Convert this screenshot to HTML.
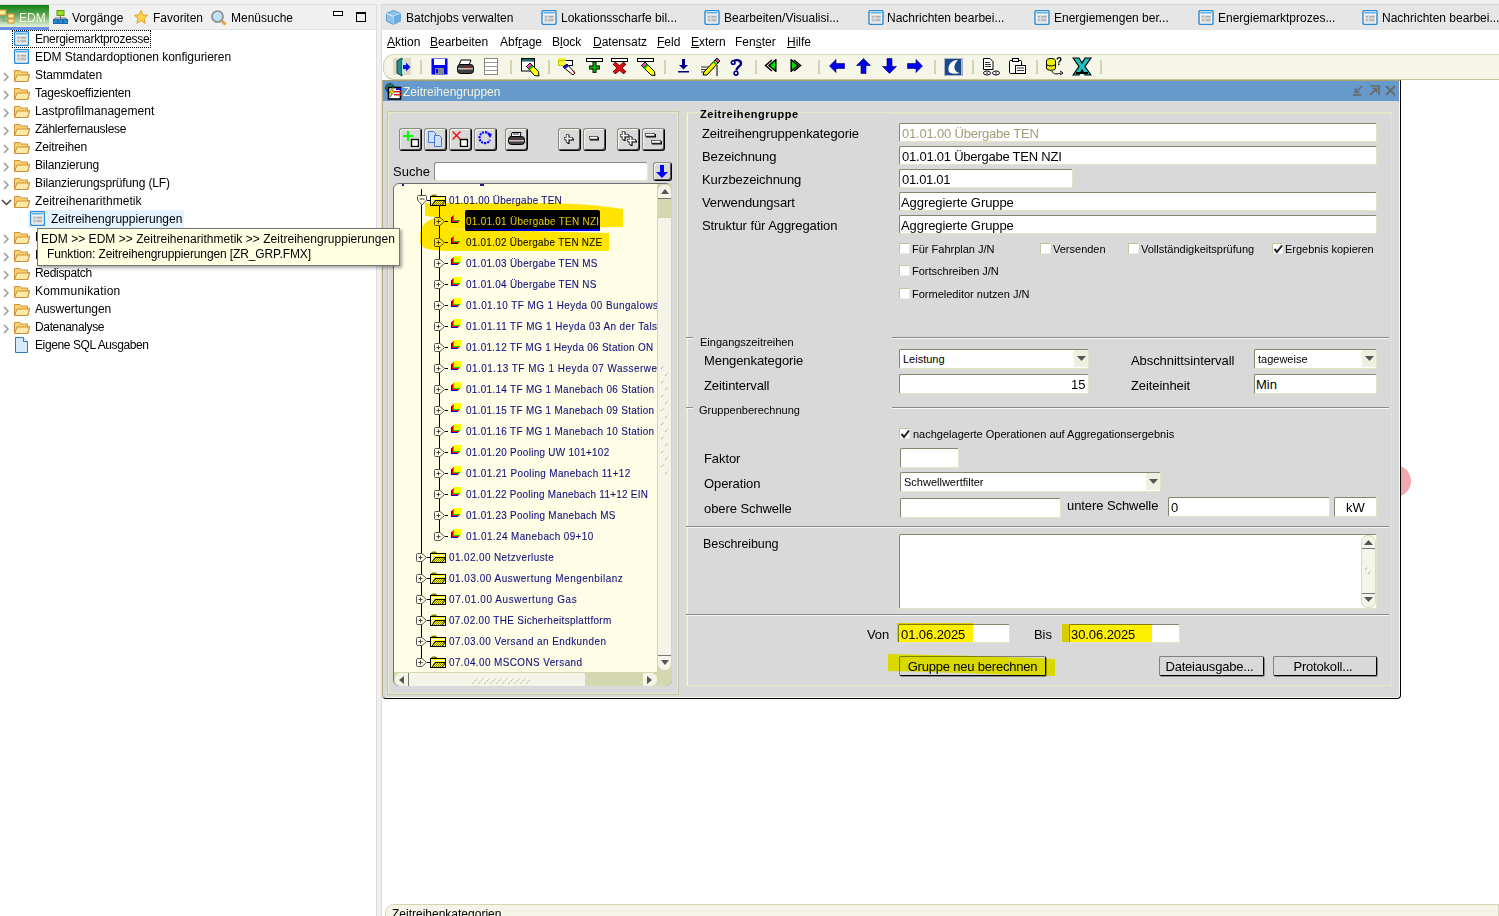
<!DOCTYPE html><html><head><meta charset="utf-8"><style>
*{margin:0;padding:0;box-sizing:border-box}
html,body{width:1499px;height:916px;overflow:hidden;background:#fff;font-family:"Liberation Sans",sans-serif;}
div,svg{position:absolute}
.t{white-space:nowrap;line-height:1}
</style></head><body>
<div style="left:0px;top:0px;width:1499px;height:4px;background:#f0f0f0"></div>
<div style="left:0px;top:4px;width:377px;height:1px;background:#dcdcdc"></div>
<div style="left:0px;top:5px;width:377px;height:24px;background:#f0f0f0"></div>
<div style="left:0px;top:29px;width:377px;height:1px;background:#e3e3e3"></div>
<div style="left:376px;top:4px;width:1px;height:912px;background:#dcdcdc"></div>
<div style="left:377px;top:0px;width:5px;height:916px;background:#f0f0f0"></div>
<div style="left:0px;top:5px;width:49px;height:22px;background:linear-gradient(#108010,#5aa85a 45%,#e8f4e0)"></div>
<div style="left:0px;top:27px;width:49px;height:3px;background:#6a8ee6"></div>
<svg style="left:0px;top:9px" width="16" height="16" viewBox="0 0 16 16"><path d="M3 7 V12 H8" stroke="#8a8a8a" fill="none" stroke-width="1"/><rect x="-1" y="1" width="7" height="5" fill="#ffe9a0" stroke="#d89030"/><rect x="8" y="5" width="6" height="4" fill="#ffe9a0" stroke="#d89030"/><rect x="8" y="10" width="6" height="4" fill="#ffe9a0" stroke="#d89030"/></svg>
<div class="t" style="left:19px;top:12px;font-size:12px;color:#fff8e0">EDM</div>
<svg style="left:53px;top:10px" width="15" height="14" viewBox="0 0 15 14"><rect x="4" y="0.5" width="7" height="5" fill="#9fdc20" stroke="#5a9a10"/><path d="M7.5 5.5V8 M2 8H13 M2 8v2 M7.5 8v2 M13 8v2" stroke="#707070" fill="none"/><rect x="0.5" y="9.5" width="4" height="4" fill="#2a8ad4" stroke="#1a6ab0"/><rect x="5.5" y="9.5" width="4" height="4" fill="#2a8ad4" stroke="#1a6ab0"/><rect x="10.5" y="9.5" width="4" height="4" fill="#2a8ad4" stroke="#1a6ab0"/></svg>
<div class="t" style="left:72px;top:12px;font-size:12px;color:#000">Vorgänge</div>
<svg style="left:134px;top:10px" width="14" height="14" viewBox="0 0 14 14"><path d="M7 0.5 L9 5 L13.5 5.3 L10 8.5 L11.2 13.3 L7 10.6 L2.8 13.3 L4 8.5 L0.5 5.3 L5 5 Z" fill="#ffd54a" stroke="#e0a020" stroke-width="1"/></svg>
<div class="t" style="left:153px;top:12px;font-size:12px;color:#000">Favoriten</div>
<svg style="left:211px;top:10px" width="16" height="16" viewBox="0 0 16 16"><circle cx="6.5" cy="6.5" r="5.5" fill="#bfe4fa" stroke="#8a8a8a" stroke-width="1.6"/><path d="M10.5 10.5 L14.5 14.5" stroke="#e0a040" stroke-width="3"/></svg>
<div class="t" style="left:231px;top:12px;font-size:12px;color:#000">Menüsuche</div>
<div style="left:333px;top:11px;width:10px;height:5px;border:1.5px solid #000;background:#fff"></div>
<div style="left:356px;top:12px;width:10px;height:10px;border:1.5px solid #000;border-top:2.5px solid #000"></div>
<svg style="left:14px;top:31px" width="15" height="15" viewBox="0 0 15 15"><rect x="0.5" y="0.5" width="14" height="14" rx="1.5" fill="#f4f4f4" stroke="#2a8ad4" stroke-width="1.4"/><rect x="2" y="2" width="11" height="1.5" fill="#5ab0e8"/><rect x="2.5" y="5" width="10" height="7.5" fill="#dcdcdc"/><path d="M3.5 6.8h2 M3.5 10h2 M7 6.8h5 M7 10h5" stroke="#999" stroke-width="1"/></svg>
<div class="t" style="left:35px;top:33px;font-size:12px;color:#000;letter-spacing:-0.282px">Energiemarktprozesse</div>
<svg style="left:14px;top:49px" width="15" height="15" viewBox="0 0 15 15"><rect x="0.5" y="0.5" width="14" height="14" rx="1.5" fill="#f4f4f4" stroke="#2a8ad4" stroke-width="1.4"/><rect x="2" y="2" width="11" height="1.5" fill="#5ab0e8"/><rect x="2.5" y="5" width="10" height="7.5" fill="#dcdcdc"/><path d="M3.5 6.8h2 M3.5 10h2 M7 6.8h5 M7 10h5" stroke="#999" stroke-width="1"/></svg>
<div class="t" style="left:35px;top:51px;font-size:12px;color:#000;letter-spacing:-0.041px">EDM Standardoptionen konfigurieren</div>
<svg style="left:3px;top:72px" width="7" height="11" viewBox="0 0 7 11"><path d="M1 1 L5 5 L1 9" fill="none" stroke="#9a9a9a" stroke-width="1.5"/></svg>
<svg style="left:14px;top:68px" width="16" height="14" viewBox="0 0 16 14"><path d="M0.5 2.5 V13.5 H14 L15.5 6.5 H13.5 V4 H7 L6 2.5 Z" fill="#f8d270" stroke="#d09038" stroke-width="1"/><path d="M0.5 13.5 L3 7 H15.5 L13.5 13.5 Z" fill="#fde9a8" stroke="#d09038" stroke-width="1"/></svg>
<div class="t" style="left:35px;top:69px;font-size:12px;color:#000;letter-spacing:-0.104px">Stammdaten</div>
<svg style="left:3px;top:90px" width="7" height="11" viewBox="0 0 7 11"><path d="M1 1 L5 5 L1 9" fill="none" stroke="#9a9a9a" stroke-width="1.5"/></svg>
<svg style="left:14px;top:86px" width="16" height="14" viewBox="0 0 16 14"><path d="M0.5 2.5 V13.5 H14 L15.5 6.5 H13.5 V4 H7 L6 2.5 Z" fill="#f8d270" stroke="#d09038" stroke-width="1"/><path d="M0.5 13.5 L3 7 H15.5 L13.5 13.5 Z" fill="#fde9a8" stroke="#d09038" stroke-width="1"/></svg>
<div class="t" style="left:35px;top:87px;font-size:12px;color:#000;letter-spacing:-0.187px">Tageskoeffizienten</div>
<svg style="left:3px;top:108px" width="7" height="11" viewBox="0 0 7 11"><path d="M1 1 L5 5 L1 9" fill="none" stroke="#9a9a9a" stroke-width="1.5"/></svg>
<svg style="left:14px;top:104px" width="16" height="14" viewBox="0 0 16 14"><path d="M0.5 2.5 V13.5 H14 L15.5 6.5 H13.5 V4 H7 L6 2.5 Z" fill="#f8d270" stroke="#d09038" stroke-width="1"/><path d="M0.5 13.5 L3 7 H15.5 L13.5 13.5 Z" fill="#fde9a8" stroke="#d09038" stroke-width="1"/></svg>
<div class="t" style="left:35px;top:105px;font-size:12px;color:#000;letter-spacing:0.029px">Lastprofilmanagement</div>
<svg style="left:3px;top:126px" width="7" height="11" viewBox="0 0 7 11"><path d="M1 1 L5 5 L1 9" fill="none" stroke="#9a9a9a" stroke-width="1.5"/></svg>
<svg style="left:14px;top:122px" width="16" height="14" viewBox="0 0 16 14"><path d="M0.5 2.5 V13.5 H14 L15.5 6.5 H13.5 V4 H7 L6 2.5 Z" fill="#f8d270" stroke="#d09038" stroke-width="1"/><path d="M0.5 13.5 L3 7 H15.5 L13.5 13.5 Z" fill="#fde9a8" stroke="#d09038" stroke-width="1"/></svg>
<div class="t" style="left:35px;top:123px;font-size:12px;color:#000;letter-spacing:-0.291px">Zählerfernauslese</div>
<svg style="left:3px;top:144px" width="7" height="11" viewBox="0 0 7 11"><path d="M1 1 L5 5 L1 9" fill="none" stroke="#9a9a9a" stroke-width="1.5"/></svg>
<svg style="left:14px;top:140px" width="16" height="14" viewBox="0 0 16 14"><path d="M0.5 2.5 V13.5 H14 L15.5 6.5 H13.5 V4 H7 L6 2.5 Z" fill="#f8d270" stroke="#d09038" stroke-width="1"/><path d="M0.5 13.5 L3 7 H15.5 L13.5 13.5 Z" fill="#fde9a8" stroke="#d09038" stroke-width="1"/></svg>
<div class="t" style="left:35px;top:141px;font-size:12px;color:#000;letter-spacing:-0.127px">Zeitreihen</div>
<svg style="left:3px;top:162px" width="7" height="11" viewBox="0 0 7 11"><path d="M1 1 L5 5 L1 9" fill="none" stroke="#9a9a9a" stroke-width="1.5"/></svg>
<svg style="left:14px;top:158px" width="16" height="14" viewBox="0 0 16 14"><path d="M0.5 2.5 V13.5 H14 L15.5 6.5 H13.5 V4 H7 L6 2.5 Z" fill="#f8d270" stroke="#d09038" stroke-width="1"/><path d="M0.5 13.5 L3 7 H15.5 L13.5 13.5 Z" fill="#fde9a8" stroke="#d09038" stroke-width="1"/></svg>
<div class="t" style="left:35px;top:159px;font-size:12px;color:#000;letter-spacing:-0.178px">Bilanzierung</div>
<svg style="left:3px;top:180px" width="7" height="11" viewBox="0 0 7 11"><path d="M1 1 L5 5 L1 9" fill="none" stroke="#9a9a9a" stroke-width="1.5"/></svg>
<svg style="left:14px;top:176px" width="16" height="14" viewBox="0 0 16 14"><path d="M0.5 2.5 V13.5 H14 L15.5 6.5 H13.5 V4 H7 L6 2.5 Z" fill="#f8d270" stroke="#d09038" stroke-width="1"/><path d="M0.5 13.5 L3 7 H15.5 L13.5 13.5 Z" fill="#fde9a8" stroke="#d09038" stroke-width="1"/></svg>
<div class="t" style="left:35px;top:177px;font-size:12px;color:#000;letter-spacing:-0.128px">Bilanzierungsprüfung (LF)</div>
<svg style="left:1px;top:199px" width="12" height="8" viewBox="0 0 12 8"><path d="M1 1 L5.5 5.5 L10 1" fill="none" stroke="#404040" stroke-width="1.5"/></svg>
<svg style="left:14px;top:194px" width="16" height="14" viewBox="0 0 16 14"><path d="M0.5 2.5 V13.5 H14 L15.5 6.5 H13.5 V4 H7 L6 2.5 Z" fill="#f8d270" stroke="#d09038" stroke-width="1"/><path d="M0.5 13.5 L3 7 H15.5 L13.5 13.5 Z" fill="#fde9a8" stroke="#d09038" stroke-width="1"/></svg>
<div class="t" style="left:35px;top:195px;font-size:12px;color:#000;letter-spacing:0.062px">Zeitreihenarithmetik</div>
<div style="left:28px;top:210px;width:156px;height:18px;background:#e5f3ff"></div>
<svg style="left:30px;top:211px" width="15" height="15" viewBox="0 0 15 15"><rect x="0.5" y="0.5" width="14" height="14" rx="1.5" fill="#f4f4f4" stroke="#2a8ad4" stroke-width="1.4"/><rect x="2" y="2" width="11" height="1.5" fill="#5ab0e8"/><rect x="2.5" y="5" width="10" height="7.5" fill="#dcdcdc"/><path d="M3.5 6.8h2 M3.5 10h2 M7 6.8h5 M7 10h5" stroke="#999" stroke-width="1"/></svg>
<div class="t" style="left:51px;top:213px;font-size:12px;color:#000;letter-spacing:0.03px">Zeitreihengruppierungen</div>
<svg style="left:3px;top:234px" width="7" height="11" viewBox="0 0 7 11"><path d="M1 1 L5 5 L1 9" fill="none" stroke="#9a9a9a" stroke-width="1.5"/></svg>
<svg style="left:14px;top:230px" width="16" height="14" viewBox="0 0 16 14"><path d="M0.5 2.5 V13.5 H14 L15.5 6.5 H13.5 V4 H7 L6 2.5 Z" fill="#f8d270" stroke="#d09038" stroke-width="1"/><path d="M0.5 13.5 L3 7 H15.5 L13.5 13.5 Z" fill="#fde9a8" stroke="#d09038" stroke-width="1"/></svg>
<div class="t" style="left:35px;top:231px;font-size:12px;color:#000;letter-spacing:0px">Einsatzplanung</div>
<svg style="left:3px;top:252px" width="7" height="11" viewBox="0 0 7 11"><path d="M1 1 L5 5 L1 9" fill="none" stroke="#9a9a9a" stroke-width="1.5"/></svg>
<svg style="left:14px;top:248px" width="16" height="14" viewBox="0 0 16 14"><path d="M0.5 2.5 V13.5 H14 L15.5 6.5 H13.5 V4 H7 L6 2.5 Z" fill="#f8d270" stroke="#d09038" stroke-width="1"/><path d="M0.5 13.5 L3 7 H15.5 L13.5 13.5 Z" fill="#fde9a8" stroke="#d09038" stroke-width="1"/></svg>
<div class="t" style="left:35px;top:249px;font-size:12px;color:#000;letter-spacing:0px">Netzbetrieb</div>
<svg style="left:3px;top:270px" width="7" height="11" viewBox="0 0 7 11"><path d="M1 1 L5 5 L1 9" fill="none" stroke="#9a9a9a" stroke-width="1.5"/></svg>
<svg style="left:14px;top:266px" width="16" height="14" viewBox="0 0 16 14"><path d="M0.5 2.5 V13.5 H14 L15.5 6.5 H13.5 V4 H7 L6 2.5 Z" fill="#f8d270" stroke="#d09038" stroke-width="1"/><path d="M0.5 13.5 L3 7 H15.5 L13.5 13.5 Z" fill="#fde9a8" stroke="#d09038" stroke-width="1"/></svg>
<div class="t" style="left:35px;top:267px;font-size:12px;color:#000;letter-spacing:-0.318px">Redispatch</div>
<svg style="left:3px;top:288px" width="7" height="11" viewBox="0 0 7 11"><path d="M1 1 L5 5 L1 9" fill="none" stroke="#9a9a9a" stroke-width="1.5"/></svg>
<svg style="left:14px;top:284px" width="16" height="14" viewBox="0 0 16 14"><path d="M0.5 2.5 V13.5 H14 L15.5 6.5 H13.5 V4 H7 L6 2.5 Z" fill="#f8d270" stroke="#d09038" stroke-width="1"/><path d="M0.5 13.5 L3 7 H15.5 L13.5 13.5 Z" fill="#fde9a8" stroke="#d09038" stroke-width="1"/></svg>
<div class="t" style="left:35px;top:285px;font-size:12px;color:#000;letter-spacing:0.21px">Kommunikation</div>
<svg style="left:3px;top:306px" width="7" height="11" viewBox="0 0 7 11"><path d="M1 1 L5 5 L1 9" fill="none" stroke="#9a9a9a" stroke-width="1.5"/></svg>
<svg style="left:14px;top:302px" width="16" height="14" viewBox="0 0 16 14"><path d="M0.5 2.5 V13.5 H14 L15.5 6.5 H13.5 V4 H7 L6 2.5 Z" fill="#f8d270" stroke="#d09038" stroke-width="1"/><path d="M0.5 13.5 L3 7 H15.5 L13.5 13.5 Z" fill="#fde9a8" stroke="#d09038" stroke-width="1"/></svg>
<div class="t" style="left:35px;top:303px;font-size:12px;color:#000;letter-spacing:-0.049px">Auswertungen</div>
<svg style="left:3px;top:324px" width="7" height="11" viewBox="0 0 7 11"><path d="M1 1 L5 5 L1 9" fill="none" stroke="#9a9a9a" stroke-width="1.5"/></svg>
<svg style="left:14px;top:320px" width="16" height="14" viewBox="0 0 16 14"><path d="M0.5 2.5 V13.5 H14 L15.5 6.5 H13.5 V4 H7 L6 2.5 Z" fill="#f8d270" stroke="#d09038" stroke-width="1"/><path d="M0.5 13.5 L3 7 H15.5 L13.5 13.5 Z" fill="#fde9a8" stroke="#d09038" stroke-width="1"/></svg>
<div class="t" style="left:35px;top:321px;font-size:12px;color:#000;letter-spacing:-0.353px">Datenanalyse</div>
<svg style="left:15px;top:337px" width="13" height="16" viewBox="0 0 13 16"><path d="M0.5 0.5 H8.5 L12.5 4.5 V15.5 H0.5 Z" fill="#d8eaf8" stroke="#2a7ac0"/><path d="M8.5 0.5 V4.5 H12.5" fill="#fff" stroke="#2a7ac0"/></svg>
<div class="t" style="left:35px;top:339px;font-size:12px;color:#000;letter-spacing:-0.387px">Eigene SQL Ausgaben</div>
<div style="left:12px;top:30px;width:139px;height:18px;border:1px dotted #000"></div>
<div style="left:37px;top:228px;width:363px;height:38px;z-index:10;background:#ffffe1;border:1px solid #767676;box-shadow:2px 2px 3px rgba(0,0,0,0.35)"></div>
<div class="t" style="left:41px;top:233px;font-size:12px;color:#000;z-index:11"><span style='letter-spacing:0.039px'>EDM &gt;&gt; EDM &gt;&gt; Zeitreihenarithmetik &gt;&gt; Zeitreihengruppierungen</span></div>
<div class="t" style="left:47px;top:248px;font-size:12px;color:#000;z-index:11;letter-spacing:-0.117px">Funktion: Zeitreihengruppierungen [ZR_GRP.FMX]</div>
<div style="left:381px;top:4px;width:1px;height:912px;background:#dcdcdc"></div>
<div style="left:382px;top:4px;width:1117px;height:1px;background:#d4d4d4"></div>
<div style="left:382px;top:5px;width:1117px;height:25px;background:#e6e6e6"></div>
<div style="left:382px;top:30px;width:1117px;height:25px;background:#fff"></div>
<svg style="left:386px;top:10px" width="15" height="15" viewBox="0 0 15 15"><path d="M7.5 0.5 L14.5 3.5 V11 L7.5 14.5 L0.5 11 V3.5 Z" fill="#8cc4ec" stroke="#5a9ad0"/><path d="M0.5 3.5 L7.5 6.5 L14.5 3.5 M7.5 6.5 V14.5" fill="none" stroke="#e8f4fc" stroke-width="1"/><path d="M7.5 6.5 L14.5 3.5 V11 L7.5 14.5Z" fill="#6aaee0"/></svg>
<div class="t" style="left:406px;top:12px;font-size:12px;color:#000">Batchjobs verwalten</div>
<svg style="left:541px;top:10px" width="16" height="15" viewBox="0 0 15 15"><rect x="0.5" y="0.5" width="14" height="14" rx="1.5" fill="#f4f4f4" stroke="#2a8ad4" stroke-width="1.4"/><rect x="2" y="2" width="11" height="1.5" fill="#5ab0e8"/><rect x="2.5" y="5" width="10" height="7.5" fill="#dcdcdc"/><path d="M3.5 6.8h2 M3.5 10h2 M7 6.8h5 M7 10h5" stroke="#999" stroke-width="1"/></svg>
<div class="t" style="left:561px;top:12px;font-size:12px;color:#000">Lokationsscharfe bil...</div>
<svg style="left:704px;top:10px" width="16" height="15" viewBox="0 0 15 15"><rect x="0.5" y="0.5" width="14" height="14" rx="1.5" fill="#f4f4f4" stroke="#2a8ad4" stroke-width="1.4"/><rect x="2" y="2" width="11" height="1.5" fill="#5ab0e8"/><rect x="2.5" y="5" width="10" height="7.5" fill="#dcdcdc"/><path d="M3.5 6.8h2 M3.5 10h2 M7 6.8h5 M7 10h5" stroke="#999" stroke-width="1"/></svg>
<div class="t" style="left:724px;top:12px;font-size:12px;color:#000">Bearbeiten/Visualisi...</div>
<svg style="left:868px;top:10px" width="16" height="15" viewBox="0 0 15 15"><rect x="0.5" y="0.5" width="14" height="14" rx="1.5" fill="#f4f4f4" stroke="#2a8ad4" stroke-width="1.4"/><rect x="2" y="2" width="11" height="1.5" fill="#5ab0e8"/><rect x="2.5" y="5" width="10" height="7.5" fill="#dcdcdc"/><path d="M3.5 6.8h2 M3.5 10h2 M7 6.8h5 M7 10h5" stroke="#999" stroke-width="1"/></svg>
<div class="t" style="left:887px;top:12px;font-size:12px;color:#000">Nachrichten bearbei...</div>
<svg style="left:1034px;top:10px" width="16" height="15" viewBox="0 0 15 15"><rect x="0.5" y="0.5" width="14" height="14" rx="1.5" fill="#f4f4f4" stroke="#2a8ad4" stroke-width="1.4"/><rect x="2" y="2" width="11" height="1.5" fill="#5ab0e8"/><rect x="2.5" y="5" width="10" height="7.5" fill="#dcdcdc"/><path d="M3.5 6.8h2 M3.5 10h2 M7 6.8h5 M7 10h5" stroke="#999" stroke-width="1"/></svg>
<div class="t" style="left:1054px;top:12px;font-size:12px;color:#000">Energiemengen ber...</div>
<svg style="left:1198px;top:10px" width="16" height="15" viewBox="0 0 15 15"><rect x="0.5" y="0.5" width="14" height="14" rx="1.5" fill="#f4f4f4" stroke="#2a8ad4" stroke-width="1.4"/><rect x="2" y="2" width="11" height="1.5" fill="#5ab0e8"/><rect x="2.5" y="5" width="10" height="7.5" fill="#dcdcdc"/><path d="M3.5 6.8h2 M3.5 10h2 M7 6.8h5 M7 10h5" stroke="#999" stroke-width="1"/></svg>
<div class="t" style="left:1218px;top:12px;font-size:12px;color:#000">Energiemarktprozes...</div>
<svg style="left:1362px;top:10px" width="16" height="15" viewBox="0 0 15 15"><rect x="0.5" y="0.5" width="14" height="14" rx="1.5" fill="#f4f4f4" stroke="#2a8ad4" stroke-width="1.4"/><rect x="2" y="2" width="11" height="1.5" fill="#5ab0e8"/><rect x="2.5" y="5" width="10" height="7.5" fill="#dcdcdc"/><path d="M3.5 6.8h2 M3.5 10h2 M7 6.8h5 M7 10h5" stroke="#999" stroke-width="1"/></svg>
<div class="t" style="left:1382px;top:12px;font-size:12px;color:#000">Nachrichten bearbei...</div>
<div class="t" style="left:387px;top:36px;font-size:12px;color:#000"><u>A</u>ktion</div>
<div class="t" style="left:430px;top:36px;font-size:12px;color:#000"><u>B</u>earbeiten</div>
<div class="t" style="left:500px;top:36px;font-size:12px;color:#000">Abf<u>r</u>age</div>
<div class="t" style="left:552px;top:36px;font-size:12px;color:#000">B<u>l</u>ock</div>
<div class="t" style="left:593px;top:36px;font-size:12px;color:#000"><u>D</u>atensatz</div>
<div class="t" style="left:657px;top:36px;font-size:12px;color:#000"><u>F</u>eld</div>
<div class="t" style="left:691px;top:36px;font-size:12px;color:#000"><u>E</u>xtern</div>
<div class="t" style="left:735px;top:36px;font-size:12px;color:#000">Fen<u>s</u>ter</div>
<div class="t" style="left:787px;top:36px;font-size:12px;color:#000"><u>H</u>ilfe</div>
<div style="left:383px;top:54px;width:1130px;height:26px;background:#f5f5e8;border:1px solid #d6d8b4;border-bottom-color:#c8c49a;border-radius:11px 0 0 11px;border-right:none"></div>
<div style="left:420px;top:60px;width:2px;height:14px;background:#d4d4b0"></div>
<div style="left:510px;top:60px;width:2px;height:14px;background:#d4d4b0"></div>
<div style="left:548px;top:60px;width:2px;height:14px;background:#d4d4b0"></div>
<div style="left:664px;top:60px;width:2px;height:14px;background:#d4d4b0"></div>
<div style="left:755px;top:60px;width:2px;height:14px;background:#d4d4b0"></div>
<div style="left:818px;top:60px;width:2px;height:14px;background:#d4d4b0"></div>
<div style="left:934px;top:60px;width:2px;height:14px;background:#d4d4b0"></div>
<div style="left:972px;top:60px;width:2px;height:14px;background:#d4d4b0"></div>
<div style="left:1036px;top:60px;width:2px;height:14px;background:#d4d4b0"></div>
<div style="left:1100px;top:60px;width:2px;height:14px;background:#d4d4b0"></div>
<svg style="left:392px;top:57px" width="20" height="20" viewBox="0 0 20 20"><rect x="1" y="1" width="18" height="17" fill="#c8c4a0" opacity="0.55"/><path d="M5 4 L10 1 V19 L5 16 Z" fill="#2a8a8a" stroke="#104848"/><rect x="10" y="3" width="1.5" height="14" fill="#a0f0f0"/><path d="M11 8 H14 V5.5 L18.5 10 L14 14.5 V12 H11Z" fill="#1010e0"/></svg>
<svg style="left:431px;top:58px" width="17" height="17" viewBox="0 0 17 17"><rect x="0.5" y="0.5" width="16" height="16" fill="#0000f0"/><rect x="3" y="1" width="11" height="6" fill="#fff"/><rect x="4" y="10" width="9" height="6" fill="#888"/><rect x="5" y="11" width="2" height="4" fill="#0000f0"/></svg>
<svg style="left:457px;top:59px" width="17" height="16" viewBox="0 0 17 16"><path d="M4 1 H14 L12 6 H2 Z" fill="#fff" stroke="#000"/><rect x="0.5" y="5.5" width="16" height="9" rx="3" fill="#404040" stroke="#000"/><rect x="1" y="9" width="15" height="1.5" fill="#c0c0c0"/><rect x="9" y="8" width="3" height="1" fill="#e00"/></svg>
<svg style="left:484px;top:58px" width="14" height="17" viewBox="0 0 14 17"><rect x="0.5" y="0.5" width="13" height="16" fill="#fff" stroke="#888"/><path d="M1 4.5H13 M1 8.5H13 M1 12.5H13" stroke="#999"/></svg>
<svg style="left:521px;top:58px" width="19" height="19" viewBox="0 0 19 19"><rect x="0.5" y="0.5" width="13" height="12.5" fill="#fff" stroke="#000"/><rect x="1" y="1" width="12" height="2.5" fill="#1a6a6a"/><path d="M5.5 8.5 L9 5 L17.5 13.5 L18 18 L13.5 17.5 Z" fill="#ffff00" stroke="#000"/><path d="M5.5 8.5 L9 5 L11 7 L7.5 10.5Z" fill="#ff40c0" stroke="#000" stroke-width="0.8"/><path d="M7.5 10.5 L11 7 L12.5 8.5 L9 12Z" fill="#00c000"/></svg>
<svg style="left:558px;top:58px" width="19" height="19" viewBox="0 0 19 19"><rect x="0.5" y="2.5" width="14" height="5" fill="#fff" stroke="#000"/><rect x="0" y="0" width="8" height="8" fill="#f0f000" opacity="0.8"/><path d="M5 9 L9 6 L17 15 L15 17Z" fill="#fff" stroke="#000"/><path d="M5 9 L9 6 L11 8 L7 11Z" fill="#1010c0"/><path d="M15 13 L17 15" stroke="#e00000" stroke-width="1.5"/></svg>
<svg style="left:586px;top:58px" width="17" height="16" viewBox="0 0 17 16"><rect x="0.5" y="0.5" width="16" height="3" fill="#fff" stroke="#000"/><path d="M8.5 4 V15 M3 9.5 H14" stroke="#000" stroke-width="4"/><path d="M8.5 4.5 V14.5 M3.5 9.5 H13.5" stroke="#10b010" stroke-width="2.2"/></svg>
<svg style="left:611px;top:58px" width="17" height="16" viewBox="0 0 17 16"><rect x="0.5" y="0.5" width="16" height="3" fill="#fff" stroke="#000"/><path d="M3 5 L14 15 M14 5 L3 15" stroke="#600000" stroke-width="4"/><path d="M3.5 5.5 L13.5 14.5 M13.5 5.5 L3.5 14.5" stroke="#e01010" stroke-width="2.4"/></svg>
<svg style="left:637px;top:58px" width="19" height="18" viewBox="0 0 19 18"><rect x="0.5" y="0.5" width="16" height="3" fill="#fff" stroke="#000"/><path d="M4.5 7.5 L8 4 L17.5 13.5 L18 17.5 L14 17 Z" fill="#ffff00" stroke="#000"/><path d="M4.5 7.5 L8 4 L10 6 L6.5 9.5Z" fill="#ff40c0" stroke="#000" stroke-width="0.8"/><path d="M6.5 9.5 L10 6 L11.5 7.5 L8 11Z" fill="#00c000"/></svg>
<svg style="left:678px;top:59px" width="11" height="14" viewBox="0 0 11 14"><path d="M5.5 0 V8" stroke="#000080" stroke-width="3"/><path d="M1 6 H10 L5.5 10.5Z" fill="#000080"/><rect x="0" y="12" width="11" height="1.5" fill="#000080"/></svg>
<svg style="left:701px;top:57px" width="19" height="19" viewBox="0 0 19 19"><path d="M0 10H8 M0 12.5H7 M0 15H6" stroke="#000" stroke-width="0.8"/><path d="M3 15 L14 3 L17 6 L6 18 L2 18Z" fill="#f0f000" stroke="#000"/><path d="M14 3 L16 1 L19 4 L17 6Z" fill="#e040a0" stroke="#000"/><path d="M12.5 4.5 L15.5 7.5" stroke="#20c020" stroke-width="2"/><path d="M16 8 V19" stroke="#000"/></svg>
<svg style="left:730px;top:58px" width="13" height="18" viewBox="0 0 13 18"><path d="M3 4 C4 1.5 11 1 11 5.5 C11 8.5 6.5 8.5 6.5 12.5" fill="none" stroke="#000080" stroke-width="2.4"/><circle cx="3.2" cy="4.5" r="1.8" fill="#fff" stroke="#000080" stroke-width="1.6"/><circle cx="6" cy="15.2" r="1.9" fill="#fff" stroke="#000080" stroke-width="1.6"/></svg>
<svg style="left:764px;top:59px" width="13" height="13" viewBox="0 0 13 13"><path d="M8 1 L1.5 6.5 L8 12" fill="none" stroke="#000" stroke-width="1.5"/><path d="M11.8 0.8 V12.2 L5 6.5Z" fill="#00e000" stroke="#000" stroke-width="1.5" stroke-linejoin="miter"/></svg>
<svg style="left:790px;top:59px" width="13" height="13" viewBox="0 0 13 13"><path d="M4 1 L10.5 6.5 L4 12" fill="none" stroke="#000" stroke-width="1.5"/><path d="M1.2 0.8 V12.2 L8 6.5Z" fill="#00e000" stroke="#000" stroke-width="1.5"/></svg>
<svg style="left:829px;top:59px" width="16" height="14" viewBox="0 0 16 14"><path d="M0.5 7 L7 0.5 V4.5 H15.5 V9.5 H7 V13.5Z" fill="#0000f0" stroke="#000060" stroke-width="0.6"/></svg>
<svg style="left:856px;top:58px" width="15" height="16" viewBox="0 0 15 16"><path d="M7.5 0.5 L14.5 7.5 H10 V15.5 H5 V7.5 H0.5Z" fill="#0000f0" stroke="#000060" stroke-width="0.6"/></svg>
<svg style="left:882px;top:58px" width="15" height="16" viewBox="0 0 15 16"><path d="M7.5 15.5 L14.5 8.5 H10 V0.5 H5 V8.5 H0.5Z" fill="#0000f0" stroke="#000060" stroke-width="0.6"/></svg>
<svg style="left:907px;top:59px" width="16" height="14" viewBox="0 0 16 14"><path d="M15.5 7 L9 0.5 V4.5 H0.5 V9.5 H9 V13.5Z" fill="#0000f0" stroke="#000060" stroke-width="0.6"/></svg>
<svg style="left:944px;top:58px" width="19" height="18" viewBox="0 0 19 18"><rect x="0" y="0" width="19" height="18" fill="#a8b4c8"/><rect x="1" y="1" width="16" height="16" fill="#1a4a8a"/><path d="M14 2 C6 2 3 9 5 14 C7 16 12 16 16 15 C10 14 8 8 14 2Z" fill="#fff"/></svg>
<svg style="left:982px;top:58px" width="20" height="18" viewBox="0 0 20 18"><path d="M1.5 0.5 H8 L11 3.5 V11.5 H1.5Z" fill="#fff" stroke="#000"/><path d="M3 4.5H8 M3 6.5H9 M3 8.5H9" stroke="#000" stroke-width="0.8"/><ellipse cx="5" cy="15" rx="3.5" ry="2" fill="#fff" stroke="#000"/><ellipse cx="14" cy="15" rx="3.5" ry="2" fill="#fff" stroke="#000"/><circle cx="5" cy="15" r="0.8"/><circle cx="14" cy="15" r="0.8"/></svg>
<svg style="left:1009px;top:58px" width="17" height="16" viewBox="0 0 17 16"><rect x="0.5" y="2.5" width="12" height="13" rx="1" fill="#fff" stroke="#000"/><rect x="3.5" y="0.5" width="6" height="3" fill="#fff" stroke="#000"/><rect x="6.5" y="7.5" width="10" height="8" fill="#fff" stroke="#000"/><path d="M8 10H15 M8 12.5H15" stroke="#000" stroke-width="0.8"/></svg>
<svg style="left:1046px;top:58px" width="19" height="17" viewBox="0 0 19 17"><ellipse cx="5" cy="3" rx="4.5" ry="2.5" fill="#f0f000" stroke="#000"/><path d="M0.5 3 V10 C0.5 13 9.5 13 9.5 10 V3" fill="#f0f000" stroke="#000"/><path d="M0.5 6 C0.5 8.5 9.5 8.5 9.5 6" fill="none" stroke="#000"/><path d="M6 13 C7 17 12 16 15 15" fill="none" stroke="#000"/><path d="M14 13 L17 15 L14 17" fill="none" stroke="#000"/></svg>
<div class="t" style="left:1056px;top:57px;font-size:10px;font-weight:bold;color:#000">?</div>
<svg style="left:1072px;top:57px" width="20" height="19" viewBox="0 0 20 19"><path d="M1 1 H7 L10 6 L13 1 H19 L13 9.5 L19 18 H13 L10 13 L7 18 H1 L7 9.5Z" fill="#20c0c0" stroke="#000" stroke-width="1.2"/><path d="M4 16 H16" stroke="#000" stroke-width="2"/></svg>
<svg style="left:1380px;top:450px" width="40" height="60" viewBox="0 0 40 60"><circle cx="15" cy="31" r="16" fill="#f2a8b0"/></svg>
<div style="left:382px;top:80px;width:1019px;height:619px;background:#d9d9d9;border-top:1px solid #a8a070;border-left:1px solid #b8b080;border-right:1px solid #000;border-bottom:1px solid #000;border-radius:0 0 4px 4px;box-shadow:inset -1px -1px 0 #fbfbe8"></div>
<div style="left:383px;top:81px;width:1016px;height:20px;background:#6699cc"></div>
<div class="t" style="left:403px;top:86px;font-size:12px;color:#f4f4dc">Zeitreihengruppen</div>
<div style="left:388px;top:112px;width:290px;height:582px;border:1px solid #e8e8c8;outline:1px solid #c8c8a8"></div>
<div style="left:686px;top:112px;width:706px;height:574px;border:1px solid #e8e8c8"></div>
<svg style="left:384px;top:83px" width="18" height="17" viewBox="0 0 18 17"><circle cx="6" cy="5" r="4.5" fill="#2a7a4a" stroke="#1a3a9a"/><rect x="4.5" y="4.5" width="12" height="11.5" fill="#fff" stroke="#000" stroke-width="1.6"/><path d="M9 4 L5 10 H8 L6 14 L11 8 H8 L10 4Z" fill="#f0f000" stroke="#000" stroke-width="0.4"/><rect x="12" y="5" width="5" height="2" fill="#1010d0"/><rect x="10" y="8" width="7" height="1.5" fill="#e02020"/><rect x="10" y="11" width="7" height="1.5" fill="#e02020"/></svg>
<svg style="left:1353px;top:85px" width="10" height="11" viewBox="0 0 10 11"><path d="M9 1 L3 7 M2.5 3.5 V7.5 H6.5" stroke="#6a6a6a" stroke-width="1.6" fill="none"/><path d="M0 10 H8" stroke="#6a6a6a" stroke-width="1.6"/></svg>
<svg style="left:1369px;top:85px" width="11" height="11" viewBox="0 0 11 11"><path d="M1 10 L7 4 M3.5 3.5 H7.5 V7.5" stroke="#6a6a6a" stroke-width="1.6" fill="none"/><path d="M1 1 H10 V10" stroke="#6a6a6a" stroke-width="1.6" fill="none"/></svg>
<svg style="left:1385px;top:85px" width="11" height="11" viewBox="0 0 11 11"><path d="M1 1 L10 10 M10 1 L1 10" stroke="#6a6a6a" stroke-width="2"/></svg>
<div style="left:399px;top:128px;width:23px;height:23px;background:#d9d9d9;border-top:1px solid #8a8a8a;border-left:1px solid #8a8a8a;border-right:1px solid #000;border-bottom:1px solid #000;border-radius:3px;box-shadow:inset 1px 1px 0 #f4f4e4, inset -1px -1px 0 #505050"></div>
<div style="left:424px;top:128px;width:23px;height:23px;background:#d9d9d9;border-top:1px solid #8a8a8a;border-left:1px solid #8a8a8a;border-right:1px solid #000;border-bottom:1px solid #000;border-radius:3px;box-shadow:inset 1px 1px 0 #f4f4e4, inset -1px -1px 0 #505050"></div>
<div style="left:449px;top:128px;width:23px;height:23px;background:#d9d9d9;border-top:1px solid #8a8a8a;border-left:1px solid #8a8a8a;border-right:1px solid #000;border-bottom:1px solid #000;border-radius:3px;box-shadow:inset 1px 1px 0 #f4f4e4, inset -1px -1px 0 #505050"></div>
<div style="left:474px;top:128px;width:23px;height:23px;background:#d9d9d9;border-top:1px solid #8a8a8a;border-left:1px solid #8a8a8a;border-right:1px solid #000;border-bottom:1px solid #000;border-radius:3px;box-shadow:inset 1px 1px 0 #f4f4e4, inset -1px -1px 0 #505050"></div>
<div style="left:505px;top:128px;width:23px;height:23px;background:#d9d9d9;border-top:1px solid #8a8a8a;border-left:1px solid #8a8a8a;border-right:1px solid #000;border-bottom:1px solid #000;border-radius:3px;box-shadow:inset 1px 1px 0 #f4f4e4, inset -1px -1px 0 #505050"></div>
<div style="left:558px;top:128px;width:23px;height:23px;background:#d9d9d9;border-top:1px solid #8a8a8a;border-left:1px solid #8a8a8a;border-right:1px solid #000;border-bottom:1px solid #000;border-radius:3px;box-shadow:inset 1px 1px 0 #f4f4e4, inset -1px -1px 0 #505050"></div>
<div style="left:583px;top:128px;width:23px;height:23px;background:#d9d9d9;border-top:1px solid #8a8a8a;border-left:1px solid #8a8a8a;border-right:1px solid #000;border-bottom:1px solid #000;border-radius:3px;box-shadow:inset 1px 1px 0 #f4f4e4, inset -1px -1px 0 #505050"></div>
<div style="left:617px;top:128px;width:23px;height:23px;background:#d9d9d9;border-top:1px solid #8a8a8a;border-left:1px solid #8a8a8a;border-right:1px solid #000;border-bottom:1px solid #000;border-radius:3px;box-shadow:inset 1px 1px 0 #f4f4e4, inset -1px -1px 0 #505050"></div>
<div style="left:642px;top:128px;width:23px;height:23px;background:#d9d9d9;border-top:1px solid #8a8a8a;border-left:1px solid #8a8a8a;border-right:1px solid #000;border-bottom:1px solid #000;border-radius:3px;box-shadow:inset 1px 1px 0 #f4f4e4, inset -1px -1px 0 #505050"></div>
<svg style="left:403px;top:131px" width="16" height="16" viewBox="0 0 16 16"><path d="M5 0 V10 M0 5 H10" stroke="#00ff00" stroke-width="2"/><rect x="8.5" y="8.5" width="7" height="7" fill="#fff" stroke="#000" stroke-width="1.4"/></svg>
<svg style="left:428px;top:131px" width="16" height="16" viewBox="0 0 16 16"><path d="M0.5 0.5 H5.5 L7.5 2.5 V11.5 H0.5Z" fill="#cfe0f8" stroke="#4a7acc"/><path d="M6.5 4.5 H11.5 L13.5 6.5 V15.5 H6.5Z" fill="#cfe0f8" stroke="#4a7acc"/></svg>
<svg style="left:452px;top:131px" width="16" height="16" viewBox="0 0 16 16"><path d="M0.5 0.5 L8.5 8.5 M8.5 0.5 L0.5 8.5" stroke="#ff0000" stroke-width="1.3"/><rect x="8.5" y="8.5" width="7" height="7" fill="#fff" stroke="#000" stroke-width="1.4"/></svg>
<svg style="left:478px;top:131px" width="15" height="15" viewBox="0 0 15 15"><path d="M11.5 3.5 A5.5 5.5 0 1 0 12 9" fill="none" stroke="#0000ff" stroke-width="2.2" stroke-dasharray="2 1"/><path d="M9 2 L14 3 L12 7Z" fill="#0000ff"/></svg>
<svg style="left:508px;top:132px" width="17" height="14" viewBox="0 0 17 14"><path d="M4 0.5 H13 L12 5 H3Z" fill="#fff" stroke="#000"/><path d="M5 2H11" stroke="#000" stroke-width="0.8"/><rect x="0.5" y="4.5" width="16" height="8" rx="3" fill="#404040" stroke="#000"/><rect x="1" y="8" width="15" height="1.5" fill="#c0c0c0"/><rect x="8" y="7" width="2" height="1" fill="#e00"/></svg>
<svg style="left:563px;top:133px" width="13" height="13" viewBox="0 0 13 13"><path d="M5.5 2 V11 M2 6.5 H11" stroke="#000" stroke-width="2.2"/><path d="M4.5 1 V10 M1 5.5 H10" stroke="#404040" stroke-width="3.2"/><path d="M4.5 1.8 V9.2 M1.8 5.5 H9.2" stroke="#fff" stroke-width="1.6"/></svg>
<svg style="left:588px;top:135px" width="12" height="8" viewBox="0 0 12 8"><rect x="2" y="2" width="9" height="3.5" fill="#000"/><rect x="1" y="1" width="9" height="3.5" fill="#404040"/><rect x="1.8" y="1.8" width="7.4" height="1.9" fill="#fff"/></svg>
<svg style="left:619px;top:131px" width="20" height="17" viewBox="0 0 20 17"><path d="M5.5 1 V10 M2 5.5 H11" stroke="#000" stroke-width="2.2"/><path d="M4.5 0 V9 M1 4.5 H10" stroke="#404040" stroke-width="3.2"/><path d="M4.5 0.8 V8.2 M1.8 4.5 H9.2" stroke="#fff" stroke-width="1.6"/><path d="M12.5 6 V15 M9 10.5 H18" stroke="#000" stroke-width="2.2"/><path d="M11.5 5 V14 M8 9.5 H17" stroke="#404040" stroke-width="3.2"/><path d="M11.5 5.8 V13.2 M8.8 9.5 H16.2" stroke="#fff" stroke-width="1.6"/></svg>
<svg style="left:644px;top:132px" width="20" height="16" viewBox="0 0 20 16"><rect x="2" y="2" width="10" height="3.5" fill="#000"/><rect x="1" y="1" width="10" height="3.5" fill="#404040"/><rect x="1.8" y="1.8" width="8.4" height="1.9" fill="#fff"/><rect x="8" y="9" width="10" height="3.5" fill="#000"/><rect x="7" y="8" width="10" height="3.5" fill="#404040"/><rect x="7.8" y="8.8" width="8.4" height="1.9" fill="#fff"/></svg>
<div class="t" style="left:393px;top:165px;font-size:13px;color:#000">Suche</div>
<div style="left:434px;top:162px;width:214px;height:19px;background:#fff;border-top:1px solid #8a8a80;border-left:1px solid #8a8a80;border-bottom:1px solid #e8e8c8;border-right:1px solid #e8e8c8;border-radius:3px"></div>
<div style="left:653px;top:162px;width:19px;height:19px;background:#d9d9d9;border-top:1px solid #8a8a8a;border-left:1px solid #8a8a8a;border-right:1px solid #000;border-bottom:1px solid #000;border-radius:3px;box-shadow:inset 1px 1px 0 #f4f4e4, inset -1px -1px 0 #505050"></div>
<svg style="left:656px;top:165px" width="12" height="14" viewBox="0 0 12 14"><path d="M6 0 V8" stroke="#0000ff" stroke-width="4"/><path d="M0 7 H12 L6 13Z" fill="#0000ff"/></svg>
<div style="left:393px;top:183px;width:279px;height:503px;background:#fffde6;border:1px solid #707070;border-radius:6px"></div>
<div style="left:394px;top:184px;width:263px;height:488px;overflow:hidden"><div style="left:27px;top:5px;width:1px;height:474px;background:#000"></div><div style="left:45px;top:21px;width:1px;height:332px;background:#000"></div><div style="left:8px;top:0px;width:2px;height:2px;background:#1c1c80"></div><div style="left:86px;top:0px;width:4px;height:2px;background:#1c1c80"></div><svg style="left:23px;top:11px" width="10" height="11" viewBox="0 0 10 11"><path d="M0.5 1.5 Q0.5 0.5 1.5 0.5 H8.5 Q9.5 0.5 9.5 1.5 V5 L5 10 L0.5 5Z" fill="#fffde6" stroke="#555" stroke-width="1"/><path d="M2.5 4H7.5" stroke="#444" stroke-width="1"/></svg><div style="left:33px;top:16px;width:3px;height:1px;background:#000"></div><svg style="left:36px;top:10px" width="16" height="12" viewBox="0 0 16 12"><defs><pattern id="dp" width="2" height="2" patternUnits="userSpaceOnUse"><rect width="2" height="2" fill="#ffff00"/><rect width="1" height="1" fill="#fff"/><rect x="1" y="1" width="1" height="1" fill="#fff"/></pattern><pattern id="dp2" width="2" height="2" patternUnits="userSpaceOnUse"><rect width="2" height="2" fill="#ffff00"/><rect width="1" height="1" fill="#808000"/><rect x="1" y="1" width="1" height="1" fill="#808000"/></pattern></defs><path d="M1 2 Q1 0.5 3 0.5 H5.5 Q7 0.5 7 2 H15 V5 H1Z" fill="#808000"/><rect x="0.5" y="2.5" width="15" height="9" fill="url(#dp)" stroke="#000"/><path d="M2 11.5 L5 6.5 H15.5 L12 11.5Z" fill="url(#dp2)" stroke="#000"/></svg><div class="t" style="left:55px;top:11px;font-size:11px;color:#10107a;-webkit-text-stroke:0.1px #10107a;transform:scaleX(0.9);transform-origin:0 0;letter-spacing:0.307px">01.01.00 Übergabe TEN</div><svg style="left:40px;top:33px" width="11" height="9" viewBox="0 0 11 9"><path d="M0.5 1.5 Q0.5 0.5 1.5 0.5 H6 L10.5 4.5 L6 8.5 H1.5 Q0.5 8.5 0.5 7.5Z" fill="#fffde6" stroke="#555" stroke-width="1"/><path d="M2.5 4.5H6.5 M4.5 2.5V6.5" stroke="#444" stroke-width="1"/></svg><div style="left:51px;top:37px;width:3px;height:1px;background:#000"></div><div style="left:71px;top:26px;width:135px;height:21px;background:#000;border-radius:2px"></div><div style="left:72px;top:45px;width:134px;height:2px;background:#0000ff"></div><svg style="left:57px;top:30px" width="10" height="10" viewBox="0 0 10 10"><g shape-rendering="crispEdges"><rect x="3" y="0" width="7" height="6" fill="#ffff00"/><rect x="2" y="1" width="1" height="6" fill="#00e000"/><rect x="2" y="6" width="7" height="1" fill="#00e000"/><rect x="1" y="2" width="1" height="6" fill="#ff0000"/><rect x="1" y="7" width="7" height="1" fill="#ff0000"/><rect x="0" y="3" width="1" height="6" fill="#0000ff"/><rect x="0" y="8" width="7" height="1" fill="#0000ff"/></g></svg><div class="t" style="left:72px;top:32px;font-size:11px;color:#10107a;-webkit-text-stroke:0.1px #10107a;transform:scaleX(0.9);transform-origin:0 0;letter-spacing:0.332px;color:#fff">01.01.01 Übergabe TEN NZI</div><svg style="left:40px;top:54px" width="11" height="9" viewBox="0 0 11 9"><path d="M0.5 1.5 Q0.5 0.5 1.5 0.5 H6 L10.5 4.5 L6 8.5 H1.5 Q0.5 8.5 0.5 7.5Z" fill="#fffde6" stroke="#555" stroke-width="1"/><path d="M2.5 4.5H6.5 M4.5 2.5V6.5" stroke="#444" stroke-width="1"/></svg><div style="left:51px;top:58px;width:3px;height:1px;background:#000"></div><svg style="left:57px;top:51px" width="10" height="10" viewBox="0 0 10 10"><g shape-rendering="crispEdges"><rect x="3" y="0" width="7" height="6" fill="#ffff00"/><rect x="2" y="1" width="1" height="6" fill="#00e000"/><rect x="2" y="6" width="7" height="1" fill="#00e000"/><rect x="1" y="2" width="1" height="6" fill="#ff0000"/><rect x="1" y="7" width="7" height="1" fill="#ff0000"/><rect x="0" y="3" width="1" height="6" fill="#0000ff"/><rect x="0" y="8" width="7" height="1" fill="#0000ff"/></g></svg><div class="t" style="left:72px;top:53px;font-size:11px;color:#10107a;-webkit-text-stroke:0.1px #10107a;transform:scaleX(0.9);transform-origin:0 0;letter-spacing:0.301px">01.01.02 Übergabe TEN NZE</div><svg style="left:40px;top:75px" width="11" height="9" viewBox="0 0 11 9"><path d="M0.5 1.5 Q0.5 0.5 1.5 0.5 H6 L10.5 4.5 L6 8.5 H1.5 Q0.5 8.5 0.5 7.5Z" fill="#fffde6" stroke="#555" stroke-width="1"/><path d="M2.5 4.5H6.5 M4.5 2.5V6.5" stroke="#444" stroke-width="1"/></svg><div style="left:51px;top:79px;width:3px;height:1px;background:#000"></div><svg style="left:57px;top:72px" width="10" height="10" viewBox="0 0 10 10"><g shape-rendering="crispEdges"><rect x="3" y="0" width="7" height="6" fill="#ffff00"/><rect x="2" y="1" width="1" height="6" fill="#00e000"/><rect x="2" y="6" width="7" height="1" fill="#00e000"/><rect x="1" y="2" width="1" height="6" fill="#ff0000"/><rect x="1" y="7" width="7" height="1" fill="#ff0000"/><rect x="0" y="3" width="1" height="6" fill="#0000ff"/><rect x="0" y="8" width="7" height="1" fill="#0000ff"/></g></svg><div class="t" style="left:72px;top:74px;font-size:11px;color:#10107a;-webkit-text-stroke:0.1px #10107a;transform:scaleX(0.9);transform-origin:0 0;letter-spacing:0.322px">01.01.03 Übergabe TEN MS</div><svg style="left:40px;top:96px" width="11" height="9" viewBox="0 0 11 9"><path d="M0.5 1.5 Q0.5 0.5 1.5 0.5 H6 L10.5 4.5 L6 8.5 H1.5 Q0.5 8.5 0.5 7.5Z" fill="#fffde6" stroke="#555" stroke-width="1"/><path d="M2.5 4.5H6.5 M4.5 2.5V6.5" stroke="#444" stroke-width="1"/></svg><div style="left:51px;top:100px;width:3px;height:1px;background:#000"></div><svg style="left:57px;top:93px" width="10" height="10" viewBox="0 0 10 10"><g shape-rendering="crispEdges"><rect x="3" y="0" width="7" height="6" fill="#ffff00"/><rect x="2" y="1" width="1" height="6" fill="#00e000"/><rect x="2" y="6" width="7" height="1" fill="#00e000"/><rect x="1" y="2" width="1" height="6" fill="#ff0000"/><rect x="1" y="7" width="7" height="1" fill="#ff0000"/><rect x="0" y="3" width="1" height="6" fill="#0000ff"/><rect x="0" y="8" width="7" height="1" fill="#0000ff"/></g></svg><div class="t" style="left:72px;top:95px;font-size:11px;color:#10107a;-webkit-text-stroke:0.1px #10107a;transform:scaleX(0.9);transform-origin:0 0;letter-spacing:0.321px">01.01.04 Übergabe TEN NS</div><svg style="left:40px;top:117px" width="11" height="9" viewBox="0 0 11 9"><path d="M0.5 1.5 Q0.5 0.5 1.5 0.5 H6 L10.5 4.5 L6 8.5 H1.5 Q0.5 8.5 0.5 7.5Z" fill="#fffde6" stroke="#555" stroke-width="1"/><path d="M2.5 4.5H6.5 M4.5 2.5V6.5" stroke="#444" stroke-width="1"/></svg><div style="left:51px;top:121px;width:3px;height:1px;background:#000"></div><svg style="left:57px;top:114px" width="10" height="10" viewBox="0 0 10 10"><g shape-rendering="crispEdges"><rect x="3" y="0" width="7" height="6" fill="#ffff00"/><rect x="2" y="1" width="1" height="6" fill="#00e000"/><rect x="2" y="6" width="7" height="1" fill="#00e000"/><rect x="1" y="2" width="1" height="6" fill="#ff0000"/><rect x="1" y="7" width="7" height="1" fill="#ff0000"/><rect x="0" y="3" width="1" height="6" fill="#0000ff"/><rect x="0" y="8" width="7" height="1" fill="#0000ff"/></g></svg><div class="t" style="left:72px;top:116px;font-size:11px;color:#10107a;-webkit-text-stroke:0.1px #10107a;transform:scaleX(0.9);transform-origin:0 0;letter-spacing:0.508px">01.01.10 TF MG 1 Heyda 00 Bungalows</div><svg style="left:40px;top:138px" width="11" height="9" viewBox="0 0 11 9"><path d="M0.5 1.5 Q0.5 0.5 1.5 0.5 H6 L10.5 4.5 L6 8.5 H1.5 Q0.5 8.5 0.5 7.5Z" fill="#fffde6" stroke="#555" stroke-width="1"/><path d="M2.5 4.5H6.5 M4.5 2.5V6.5" stroke="#444" stroke-width="1"/></svg><div style="left:51px;top:142px;width:3px;height:1px;background:#000"></div><svg style="left:57px;top:135px" width="10" height="10" viewBox="0 0 10 10"><g shape-rendering="crispEdges"><rect x="3" y="0" width="7" height="6" fill="#ffff00"/><rect x="2" y="1" width="1" height="6" fill="#00e000"/><rect x="2" y="6" width="7" height="1" fill="#00e000"/><rect x="1" y="2" width="1" height="6" fill="#ff0000"/><rect x="1" y="7" width="7" height="1" fill="#ff0000"/><rect x="0" y="3" width="1" height="6" fill="#0000ff"/><rect x="0" y="8" width="7" height="1" fill="#0000ff"/></g></svg><div class="t" style="left:72px;top:137px;font-size:11px;color:#10107a;-webkit-text-stroke:0.1px #10107a;transform:scaleX(0.9);transform-origin:0 0;letter-spacing:0.459px">01.01.11 TF MG 1 Heyda 03 An der Talsperre</div><svg style="left:40px;top:159px" width="11" height="9" viewBox="0 0 11 9"><path d="M0.5 1.5 Q0.5 0.5 1.5 0.5 H6 L10.5 4.5 L6 8.5 H1.5 Q0.5 8.5 0.5 7.5Z" fill="#fffde6" stroke="#555" stroke-width="1"/><path d="M2.5 4.5H6.5 M4.5 2.5V6.5" stroke="#444" stroke-width="1"/></svg><div style="left:51px;top:163px;width:3px;height:1px;background:#000"></div><svg style="left:57px;top:156px" width="10" height="10" viewBox="0 0 10 10"><g shape-rendering="crispEdges"><rect x="3" y="0" width="7" height="6" fill="#ffff00"/><rect x="2" y="1" width="1" height="6" fill="#00e000"/><rect x="2" y="6" width="7" height="1" fill="#00e000"/><rect x="1" y="2" width="1" height="6" fill="#ff0000"/><rect x="1" y="7" width="7" height="1" fill="#ff0000"/><rect x="0" y="3" width="1" height="6" fill="#0000ff"/><rect x="0" y="8" width="7" height="1" fill="#0000ff"/></g></svg><div class="t" style="left:72px;top:158px;font-size:11px;color:#10107a;-webkit-text-stroke:0.1px #10107a;transform:scaleX(0.9);transform-origin:0 0;letter-spacing:0.338px">01.01.12 TF MG 1 Heyda 06 Station ON</div><svg style="left:40px;top:180px" width="11" height="9" viewBox="0 0 11 9"><path d="M0.5 1.5 Q0.5 0.5 1.5 0.5 H6 L10.5 4.5 L6 8.5 H1.5 Q0.5 8.5 0.5 7.5Z" fill="#fffde6" stroke="#555" stroke-width="1"/><path d="M2.5 4.5H6.5 M4.5 2.5V6.5" stroke="#444" stroke-width="1"/></svg><div style="left:51px;top:184px;width:3px;height:1px;background:#000"></div><svg style="left:57px;top:177px" width="10" height="10" viewBox="0 0 10 10"><g shape-rendering="crispEdges"><rect x="3" y="0" width="7" height="6" fill="#ffff00"/><rect x="2" y="1" width="1" height="6" fill="#00e000"/><rect x="2" y="6" width="7" height="1" fill="#00e000"/><rect x="1" y="2" width="1" height="6" fill="#ff0000"/><rect x="1" y="7" width="7" height="1" fill="#ff0000"/><rect x="0" y="3" width="1" height="6" fill="#0000ff"/><rect x="0" y="8" width="7" height="1" fill="#0000ff"/></g></svg><div class="t" style="left:72px;top:179px;font-size:11px;color:#10107a;-webkit-text-stroke:0.1px #10107a;transform:scaleX(0.9);transform-origin:0 0;letter-spacing:0.576px">01.01.13 TF MG 1 Heyda 07 Wasserwerk</div><svg style="left:40px;top:201px" width="11" height="9" viewBox="0 0 11 9"><path d="M0.5 1.5 Q0.5 0.5 1.5 0.5 H6 L10.5 4.5 L6 8.5 H1.5 Q0.5 8.5 0.5 7.5Z" fill="#fffde6" stroke="#555" stroke-width="1"/><path d="M2.5 4.5H6.5 M4.5 2.5V6.5" stroke="#444" stroke-width="1"/></svg><div style="left:51px;top:205px;width:3px;height:1px;background:#000"></div><svg style="left:57px;top:198px" width="10" height="10" viewBox="0 0 10 10"><g shape-rendering="crispEdges"><rect x="3" y="0" width="7" height="6" fill="#ffff00"/><rect x="2" y="1" width="1" height="6" fill="#00e000"/><rect x="2" y="6" width="7" height="1" fill="#00e000"/><rect x="1" y="2" width="1" height="6" fill="#ff0000"/><rect x="1" y="7" width="7" height="1" fill="#ff0000"/><rect x="0" y="3" width="1" height="6" fill="#0000ff"/><rect x="0" y="8" width="7" height="1" fill="#0000ff"/></g></svg><div class="t" style="left:72px;top:200px;font-size:11px;color:#10107a;-webkit-text-stroke:0.1px #10107a;transform:scaleX(0.9);transform-origin:0 0;letter-spacing:0.366px">01.01.14 TF MG 1 Manebach 06 Station</div><svg style="left:40px;top:222px" width="11" height="9" viewBox="0 0 11 9"><path d="M0.5 1.5 Q0.5 0.5 1.5 0.5 H6 L10.5 4.5 L6 8.5 H1.5 Q0.5 8.5 0.5 7.5Z" fill="#fffde6" stroke="#555" stroke-width="1"/><path d="M2.5 4.5H6.5 M4.5 2.5V6.5" stroke="#444" stroke-width="1"/></svg><div style="left:51px;top:226px;width:3px;height:1px;background:#000"></div><svg style="left:57px;top:219px" width="10" height="10" viewBox="0 0 10 10"><g shape-rendering="crispEdges"><rect x="3" y="0" width="7" height="6" fill="#ffff00"/><rect x="2" y="1" width="1" height="6" fill="#00e000"/><rect x="2" y="6" width="7" height="1" fill="#00e000"/><rect x="1" y="2" width="1" height="6" fill="#ff0000"/><rect x="1" y="7" width="7" height="1" fill="#ff0000"/><rect x="0" y="3" width="1" height="6" fill="#0000ff"/><rect x="0" y="8" width="7" height="1" fill="#0000ff"/></g></svg><div class="t" style="left:72px;top:221px;font-size:11px;color:#10107a;-webkit-text-stroke:0.1px #10107a;transform:scaleX(0.9);transform-origin:0 0;letter-spacing:0.366px">01.01.15 TF MG 1 Manebach 09 Station</div><svg style="left:40px;top:243px" width="11" height="9" viewBox="0 0 11 9"><path d="M0.5 1.5 Q0.5 0.5 1.5 0.5 H6 L10.5 4.5 L6 8.5 H1.5 Q0.5 8.5 0.5 7.5Z" fill="#fffde6" stroke="#555" stroke-width="1"/><path d="M2.5 4.5H6.5 M4.5 2.5V6.5" stroke="#444" stroke-width="1"/></svg><div style="left:51px;top:247px;width:3px;height:1px;background:#000"></div><svg style="left:57px;top:240px" width="10" height="10" viewBox="0 0 10 10"><g shape-rendering="crispEdges"><rect x="3" y="0" width="7" height="6" fill="#ffff00"/><rect x="2" y="1" width="1" height="6" fill="#00e000"/><rect x="2" y="6" width="7" height="1" fill="#00e000"/><rect x="1" y="2" width="1" height="6" fill="#ff0000"/><rect x="1" y="7" width="7" height="1" fill="#ff0000"/><rect x="0" y="3" width="1" height="6" fill="#0000ff"/><rect x="0" y="8" width="7" height="1" fill="#0000ff"/></g></svg><div class="t" style="left:72px;top:242px;font-size:11px;color:#10107a;-webkit-text-stroke:0.1px #10107a;transform:scaleX(0.9);transform-origin:0 0;letter-spacing:0.366px">01.01.16 TF MG 1 Manebach 10 Station</div><svg style="left:40px;top:264px" width="11" height="9" viewBox="0 0 11 9"><path d="M0.5 1.5 Q0.5 0.5 1.5 0.5 H6 L10.5 4.5 L6 8.5 H1.5 Q0.5 8.5 0.5 7.5Z" fill="#fffde6" stroke="#555" stroke-width="1"/><path d="M2.5 4.5H6.5 M4.5 2.5V6.5" stroke="#444" stroke-width="1"/></svg><div style="left:51px;top:268px;width:3px;height:1px;background:#000"></div><svg style="left:57px;top:261px" width="10" height="10" viewBox="0 0 10 10"><g shape-rendering="crispEdges"><rect x="3" y="0" width="7" height="6" fill="#ffff00"/><rect x="2" y="1" width="1" height="6" fill="#00e000"/><rect x="2" y="6" width="7" height="1" fill="#00e000"/><rect x="1" y="2" width="1" height="6" fill="#ff0000"/><rect x="1" y="7" width="7" height="1" fill="#ff0000"/><rect x="0" y="3" width="1" height="6" fill="#0000ff"/><rect x="0" y="8" width="7" height="1" fill="#0000ff"/></g></svg><div class="t" style="left:72px;top:263px;font-size:11px;color:#10107a;-webkit-text-stroke:0.1px #10107a;transform:scaleX(0.9);transform-origin:0 0;letter-spacing:0.345px">01.01.20 Pooling UW 101+102</div><svg style="left:40px;top:285px" width="11" height="9" viewBox="0 0 11 9"><path d="M0.5 1.5 Q0.5 0.5 1.5 0.5 H6 L10.5 4.5 L6 8.5 H1.5 Q0.5 8.5 0.5 7.5Z" fill="#fffde6" stroke="#555" stroke-width="1"/><path d="M2.5 4.5H6.5 M4.5 2.5V6.5" stroke="#444" stroke-width="1"/></svg><div style="left:51px;top:289px;width:3px;height:1px;background:#000"></div><svg style="left:57px;top:282px" width="10" height="10" viewBox="0 0 10 10"><g shape-rendering="crispEdges"><rect x="3" y="0" width="7" height="6" fill="#ffff00"/><rect x="2" y="1" width="1" height="6" fill="#00e000"/><rect x="2" y="6" width="7" height="1" fill="#00e000"/><rect x="1" y="2" width="1" height="6" fill="#ff0000"/><rect x="1" y="7" width="7" height="1" fill="#ff0000"/><rect x="0" y="3" width="1" height="6" fill="#0000ff"/><rect x="0" y="8" width="7" height="1" fill="#0000ff"/></g></svg><div class="t" style="left:72px;top:284px;font-size:11px;color:#10107a;-webkit-text-stroke:0.1px #10107a;transform:scaleX(0.9);transform-origin:0 0;letter-spacing:0.411px">01.01.21 Pooling Manebach 11+12</div><svg style="left:40px;top:306px" width="11" height="9" viewBox="0 0 11 9"><path d="M0.5 1.5 Q0.5 0.5 1.5 0.5 H6 L10.5 4.5 L6 8.5 H1.5 Q0.5 8.5 0.5 7.5Z" fill="#fffde6" stroke="#555" stroke-width="1"/><path d="M2.5 4.5H6.5 M4.5 2.5V6.5" stroke="#444" stroke-width="1"/></svg><div style="left:51px;top:310px;width:3px;height:1px;background:#000"></div><svg style="left:57px;top:303px" width="10" height="10" viewBox="0 0 10 10"><g shape-rendering="crispEdges"><rect x="3" y="0" width="7" height="6" fill="#ffff00"/><rect x="2" y="1" width="1" height="6" fill="#00e000"/><rect x="2" y="6" width="7" height="1" fill="#00e000"/><rect x="1" y="2" width="1" height="6" fill="#ff0000"/><rect x="1" y="7" width="7" height="1" fill="#ff0000"/><rect x="0" y="3" width="1" height="6" fill="#0000ff"/><rect x="0" y="8" width="7" height="1" fill="#0000ff"/></g></svg><div class="t" style="left:72px;top:305px;font-size:11px;color:#10107a;-webkit-text-stroke:0.1px #10107a;transform:scaleX(0.9);transform-origin:0 0;letter-spacing:0.312px">01.01.22 Pooling Manebach 11+12 EIN</div><svg style="left:40px;top:327px" width="11" height="9" viewBox="0 0 11 9"><path d="M0.5 1.5 Q0.5 0.5 1.5 0.5 H6 L10.5 4.5 L6 8.5 H1.5 Q0.5 8.5 0.5 7.5Z" fill="#fffde6" stroke="#555" stroke-width="1"/><path d="M2.5 4.5H6.5 M4.5 2.5V6.5" stroke="#444" stroke-width="1"/></svg><div style="left:51px;top:331px;width:3px;height:1px;background:#000"></div><svg style="left:57px;top:324px" width="10" height="10" viewBox="0 0 10 10"><g shape-rendering="crispEdges"><rect x="3" y="0" width="7" height="6" fill="#ffff00"/><rect x="2" y="1" width="1" height="6" fill="#00e000"/><rect x="2" y="6" width="7" height="1" fill="#00e000"/><rect x="1" y="2" width="1" height="6" fill="#ff0000"/><rect x="1" y="7" width="7" height="1" fill="#ff0000"/><rect x="0" y="3" width="1" height="6" fill="#0000ff"/><rect x="0" y="8" width="7" height="1" fill="#0000ff"/></g></svg><div class="t" style="left:72px;top:326px;font-size:11px;color:#10107a;-webkit-text-stroke:0.1px #10107a;transform:scaleX(0.9);transform-origin:0 0;letter-spacing:0.347px">01.01.23 Pooling Manebach MS</div><svg style="left:40px;top:348px" width="11" height="9" viewBox="0 0 11 9"><path d="M0.5 1.5 Q0.5 0.5 1.5 0.5 H6 L10.5 4.5 L6 8.5 H1.5 Q0.5 8.5 0.5 7.5Z" fill="#fffde6" stroke="#555" stroke-width="1"/><path d="M2.5 4.5H6.5 M4.5 2.5V6.5" stroke="#444" stroke-width="1"/></svg><div style="left:51px;top:352px;width:3px;height:1px;background:#000"></div><svg style="left:57px;top:345px" width="10" height="10" viewBox="0 0 10 10"><g shape-rendering="crispEdges"><rect x="3" y="0" width="7" height="6" fill="#ffff00"/><rect x="2" y="1" width="1" height="6" fill="#00e000"/><rect x="2" y="6" width="7" height="1" fill="#00e000"/><rect x="1" y="2" width="1" height="6" fill="#ff0000"/><rect x="1" y="7" width="7" height="1" fill="#ff0000"/><rect x="0" y="3" width="1" height="6" fill="#0000ff"/><rect x="0" y="8" width="7" height="1" fill="#0000ff"/></g></svg><div class="t" style="left:72px;top:347px;font-size:11px;color:#10107a;-webkit-text-stroke:0.1px #10107a;transform:scaleX(0.9);transform-origin:0 0;letter-spacing:0.462px">01.01.24 Manebach 09+10</div><svg style="left:22px;top:369px" width="11" height="9" viewBox="0 0 11 9"><path d="M0.5 1.5 Q0.5 0.5 1.5 0.5 H6 L10.5 4.5 L6 8.5 H1.5 Q0.5 8.5 0.5 7.5Z" fill="#fffde6" stroke="#555" stroke-width="1"/><path d="M2.5 4.5H6.5 M4.5 2.5V6.5" stroke="#444" stroke-width="1"/></svg><div style="left:33px;top:373px;width:3px;height:1px;background:#000"></div><svg style="left:36px;top:367px" width="16" height="12" viewBox="0 0 16 12"><defs><pattern id="dp" width="2" height="2" patternUnits="userSpaceOnUse"><rect width="2" height="2" fill="#ffff00"/><rect width="1" height="1" fill="#fff"/><rect x="1" y="1" width="1" height="1" fill="#fff"/></pattern><pattern id="dp2" width="2" height="2" patternUnits="userSpaceOnUse"><rect width="2" height="2" fill="#ffff00"/><rect width="1" height="1" fill="#808000"/><rect x="1" y="1" width="1" height="1" fill="#808000"/></pattern></defs><path d="M1 2 Q1 0.5 3 0.5 H5.5 Q7 0.5 7 2 H15 V5 H1Z" fill="#808000"/><rect x="0.5" y="2.5" width="15" height="9" fill="url(#dp)" stroke="#000"/><path d="M2 11.5 L5 6.5 H15.5 L12 11.5Z" fill="url(#dp2)" stroke="#000"/></svg><div class="t" style="left:55px;top:368px;font-size:11px;color:#10107a;-webkit-text-stroke:0.1px #10107a;transform:scaleX(0.9);transform-origin:0 0;letter-spacing:0.465px">01.02.00 Netzverluste</div><svg style="left:22px;top:390px" width="11" height="9" viewBox="0 0 11 9"><path d="M0.5 1.5 Q0.5 0.5 1.5 0.5 H6 L10.5 4.5 L6 8.5 H1.5 Q0.5 8.5 0.5 7.5Z" fill="#fffde6" stroke="#555" stroke-width="1"/><path d="M2.5 4.5H6.5 M4.5 2.5V6.5" stroke="#444" stroke-width="1"/></svg><div style="left:33px;top:394px;width:3px;height:1px;background:#000"></div><svg style="left:36px;top:388px" width="16" height="12" viewBox="0 0 16 12"><defs><pattern id="dp" width="2" height="2" patternUnits="userSpaceOnUse"><rect width="2" height="2" fill="#ffff00"/><rect width="1" height="1" fill="#fff"/><rect x="1" y="1" width="1" height="1" fill="#fff"/></pattern><pattern id="dp2" width="2" height="2" patternUnits="userSpaceOnUse"><rect width="2" height="2" fill="#ffff00"/><rect width="1" height="1" fill="#808000"/><rect x="1" y="1" width="1" height="1" fill="#808000"/></pattern></defs><path d="M1 2 Q1 0.5 3 0.5 H5.5 Q7 0.5 7 2 H15 V5 H1Z" fill="#808000"/><rect x="0.5" y="2.5" width="15" height="9" fill="url(#dp)" stroke="#000"/><path d="M2 11.5 L5 6.5 H15.5 L12 11.5Z" fill="url(#dp2)" stroke="#000"/></svg><div class="t" style="left:55px;top:389px;font-size:11px;color:#10107a;-webkit-text-stroke:0.1px #10107a;transform:scaleX(0.9);transform-origin:0 0;letter-spacing:0.587px">01.03.00 Auswertung Mengenbilanz</div><svg style="left:22px;top:411px" width="11" height="9" viewBox="0 0 11 9"><path d="M0.5 1.5 Q0.5 0.5 1.5 0.5 H6 L10.5 4.5 L6 8.5 H1.5 Q0.5 8.5 0.5 7.5Z" fill="#fffde6" stroke="#555" stroke-width="1"/><path d="M2.5 4.5H6.5 M4.5 2.5V6.5" stroke="#444" stroke-width="1"/></svg><div style="left:33px;top:415px;width:3px;height:1px;background:#000"></div><svg style="left:36px;top:409px" width="16" height="12" viewBox="0 0 16 12"><defs><pattern id="dp" width="2" height="2" patternUnits="userSpaceOnUse"><rect width="2" height="2" fill="#ffff00"/><rect width="1" height="1" fill="#fff"/><rect x="1" y="1" width="1" height="1" fill="#fff"/></pattern><pattern id="dp2" width="2" height="2" patternUnits="userSpaceOnUse"><rect width="2" height="2" fill="#ffff00"/><rect width="1" height="1" fill="#808000"/><rect x="1" y="1" width="1" height="1" fill="#808000"/></pattern></defs><path d="M1 2 Q1 0.5 3 0.5 H5.5 Q7 0.5 7 2 H15 V5 H1Z" fill="#808000"/><rect x="0.5" y="2.5" width="15" height="9" fill="url(#dp)" stroke="#000"/><path d="M2 11.5 L5 6.5 H15.5 L12 11.5Z" fill="url(#dp2)" stroke="#000"/></svg><div class="t" style="left:55px;top:410px;font-size:11px;color:#10107a;-webkit-text-stroke:0.1px #10107a;transform:scaleX(0.9);transform-origin:0 0;letter-spacing:0.694px">07.01.00 Auswertung Gas</div><svg style="left:22px;top:432px" width="11" height="9" viewBox="0 0 11 9"><path d="M0.5 1.5 Q0.5 0.5 1.5 0.5 H6 L10.5 4.5 L6 8.5 H1.5 Q0.5 8.5 0.5 7.5Z" fill="#fffde6" stroke="#555" stroke-width="1"/><path d="M2.5 4.5H6.5 M4.5 2.5V6.5" stroke="#444" stroke-width="1"/></svg><div style="left:33px;top:436px;width:3px;height:1px;background:#000"></div><svg style="left:36px;top:430px" width="16" height="12" viewBox="0 0 16 12"><defs><pattern id="dp" width="2" height="2" patternUnits="userSpaceOnUse"><rect width="2" height="2" fill="#ffff00"/><rect width="1" height="1" fill="#fff"/><rect x="1" y="1" width="1" height="1" fill="#fff"/></pattern><pattern id="dp2" width="2" height="2" patternUnits="userSpaceOnUse"><rect width="2" height="2" fill="#ffff00"/><rect width="1" height="1" fill="#808000"/><rect x="1" y="1" width="1" height="1" fill="#808000"/></pattern></defs><path d="M1 2 Q1 0.5 3 0.5 H5.5 Q7 0.5 7 2 H15 V5 H1Z" fill="#808000"/><rect x="0.5" y="2.5" width="15" height="9" fill="url(#dp)" stroke="#000"/><path d="M2 11.5 L5 6.5 H15.5 L12 11.5Z" fill="url(#dp2)" stroke="#000"/></svg><div class="t" style="left:55px;top:431px;font-size:11px;color:#10107a;-webkit-text-stroke:0.1px #10107a;transform:scaleX(0.9);transform-origin:0 0;letter-spacing:0.386px">07.02.00 THE Sicherheitsplattform</div><svg style="left:22px;top:453px" width="11" height="9" viewBox="0 0 11 9"><path d="M0.5 1.5 Q0.5 0.5 1.5 0.5 H6 L10.5 4.5 L6 8.5 H1.5 Q0.5 8.5 0.5 7.5Z" fill="#fffde6" stroke="#555" stroke-width="1"/><path d="M2.5 4.5H6.5 M4.5 2.5V6.5" stroke="#444" stroke-width="1"/></svg><div style="left:33px;top:457px;width:3px;height:1px;background:#000"></div><svg style="left:36px;top:451px" width="16" height="12" viewBox="0 0 16 12"><defs><pattern id="dp" width="2" height="2" patternUnits="userSpaceOnUse"><rect width="2" height="2" fill="#ffff00"/><rect width="1" height="1" fill="#fff"/><rect x="1" y="1" width="1" height="1" fill="#fff"/></pattern><pattern id="dp2" width="2" height="2" patternUnits="userSpaceOnUse"><rect width="2" height="2" fill="#ffff00"/><rect width="1" height="1" fill="#808000"/><rect x="1" y="1" width="1" height="1" fill="#808000"/></pattern></defs><path d="M1 2 Q1 0.5 3 0.5 H5.5 Q7 0.5 7 2 H15 V5 H1Z" fill="#808000"/><rect x="0.5" y="2.5" width="15" height="9" fill="url(#dp)" stroke="#000"/><path d="M2 11.5 L5 6.5 H15.5 L12 11.5Z" fill="url(#dp2)" stroke="#000"/></svg><div class="t" style="left:55px;top:452px;font-size:11px;color:#10107a;-webkit-text-stroke:0.1px #10107a;transform:scaleX(0.9);transform-origin:0 0;letter-spacing:0.506px">07.03.00 Versand an Endkunden</div><svg style="left:22px;top:474px" width="11" height="9" viewBox="0 0 11 9"><path d="M0.5 1.5 Q0.5 0.5 1.5 0.5 H6 L10.5 4.5 L6 8.5 H1.5 Q0.5 8.5 0.5 7.5Z" fill="#fffde6" stroke="#555" stroke-width="1"/><path d="M2.5 4.5H6.5 M4.5 2.5V6.5" stroke="#444" stroke-width="1"/></svg><div style="left:33px;top:478px;width:3px;height:1px;background:#000"></div><svg style="left:36px;top:472px" width="16" height="12" viewBox="0 0 16 12"><defs><pattern id="dp" width="2" height="2" patternUnits="userSpaceOnUse"><rect width="2" height="2" fill="#ffff00"/><rect width="1" height="1" fill="#fff"/><rect x="1" y="1" width="1" height="1" fill="#fff"/></pattern><pattern id="dp2" width="2" height="2" patternUnits="userSpaceOnUse"><rect width="2" height="2" fill="#ffff00"/><rect width="1" height="1" fill="#808000"/><rect x="1" y="1" width="1" height="1" fill="#808000"/></pattern></defs><path d="M1 2 Q1 0.5 3 0.5 H5.5 Q7 0.5 7 2 H15 V5 H1Z" fill="#808000"/><rect x="0.5" y="2.5" width="15" height="9" fill="url(#dp)" stroke="#000"/><path d="M2 11.5 L5 6.5 H15.5 L12 11.5Z" fill="url(#dp2)" stroke="#000"/></svg><div class="t" style="left:55px;top:473px;font-size:11px;color:#10107a;-webkit-text-stroke:0.1px #10107a;transform:scaleX(0.9);transform-origin:0 0;letter-spacing:0.465px">07.04.00 MSCONS Versand</div><svg style="mix-blend-mode:multiply;left:0px;top:0px" width="263" height="80" viewBox="0 0 263 80"><g style="mix-blend-mode:multiply" transform="translate(-394,-184)"><path d="M425 203 L555 203 C580 204 605 206 623 209 L623 227 L445 229 L436 217 L425 216 Z" fill="#ffe600"/><path d="M436 218 C428 219 420 225 420 235 L420 243 C422 249 430 250 445 251 L609 251 L609 233 L445 229 Z" fill="#ffe600"/></g></svg></div>
<div style="left:657px;top:184px;width:15px;height:488px;background:#d4d8b0"></div>
<div style="left:658px;top:185px;width:13px;height:13px;background:#f4f4e8;border-radius:6px 6px 0 0"></div>
<svg style="left:661px;top:189px" width="8" height="5" viewBox="0 0 8 5"><path d="M0 5 L4 0 L8 5Z" fill="#555"/></svg>
<div style="left:658px;top:198px;width:13px;height:1px;background:#777"></div>
<div style="left:658px;top:218px;width:13px;height:437px;background:#f4f4e8"></div>
<svg style="left:658px;top:365px" width="13" height="118" viewBox="0 0 13 118"><path d="M3 4 l3 -3" stroke="#909070" stroke-width="1" stroke-dasharray="1 1"/><path d="M7 11 l3 -3" stroke="#909070" stroke-width="1" stroke-dasharray="1 1"/><path d="M3 18 l3 -3" stroke="#909070" stroke-width="1" stroke-dasharray="1 1"/><path d="M7 25 l3 -3" stroke="#909070" stroke-width="1" stroke-dasharray="1 1"/><path d="M3 32 l3 -3" stroke="#909070" stroke-width="1" stroke-dasharray="1 1"/><path d="M7 39 l3 -3" stroke="#909070" stroke-width="1" stroke-dasharray="1 1"/><path d="M3 46 l3 -3" stroke="#909070" stroke-width="1" stroke-dasharray="1 1"/><path d="M7 53 l3 -3" stroke="#909070" stroke-width="1" stroke-dasharray="1 1"/><path d="M3 60 l3 -3" stroke="#909070" stroke-width="1" stroke-dasharray="1 1"/><path d="M7 67 l3 -3" stroke="#909070" stroke-width="1" stroke-dasharray="1 1"/><path d="M3 74 l3 -3" stroke="#909070" stroke-width="1" stroke-dasharray="1 1"/><path d="M7 81 l3 -3" stroke="#909070" stroke-width="1" stroke-dasharray="1 1"/><path d="M3 88 l3 -3" stroke="#909070" stroke-width="1" stroke-dasharray="1 1"/><path d="M7 95 l3 -3" stroke="#909070" stroke-width="1" stroke-dasharray="1 1"/><path d="M3 102 l3 -3" stroke="#909070" stroke-width="1" stroke-dasharray="1 1"/><path d="M7 109 l3 -3" stroke="#909070" stroke-width="1" stroke-dasharray="1 1"/></svg>
<div style="left:658px;top:655px;width:13px;height:1px;background:#777"></div>
<div style="left:658px;top:656px;width:13px;height:14px;background:#f4f4e8;border-radius:0 0 6px 6px"></div>
<svg style="left:661px;top:660px" width="8" height="5" viewBox="0 0 8 5"><path d="M0 0 L4 5 L8 0Z" fill="#555"/></svg>
<div style="left:394px;top:672px;width:278px;height:14px;background:#d4d8b0;border-radius:0 0 6px 6px"></div>
<div style="left:395px;top:673px;width:14px;height:13px;background:#f4f4e8;border-radius:6px 0 0 6px"></div>
<svg style="left:399px;top:676px" width="5" height="8" viewBox="0 0 5 8"><path d="M5 0 L0 4 L5 8Z" fill="#555"/></svg>
<div style="left:408px;top:673px;width:1px;height:13px;background:#777"></div>
<div style="left:409px;top:673px;width:176px;height:13px;background:#f4f4e8"></div>
<svg style="left:470px;top:677px" width="60" height="8" viewBox="0 0 60 8"><path d="M2 7 l3 -3 M5 4 l3 -3" stroke="#909070" stroke-width="0.8" stroke-dasharray="1 1"/><path d="M8 7 l3 -3 M11 4 l3 -3" stroke="#909070" stroke-width="0.8" stroke-dasharray="1 1"/><path d="M14 7 l3 -3 M17 4 l3 -3" stroke="#909070" stroke-width="0.8" stroke-dasharray="1 1"/><path d="M20 7 l3 -3 M23 4 l3 -3" stroke="#909070" stroke-width="0.8" stroke-dasharray="1 1"/><path d="M26 7 l3 -3 M29 4 l3 -3" stroke="#909070" stroke-width="0.8" stroke-dasharray="1 1"/><path d="M32 7 l3 -3 M35 4 l3 -3" stroke="#909070" stroke-width="0.8" stroke-dasharray="1 1"/><path d="M38 7 l3 -3 M41 4 l3 -3" stroke="#909070" stroke-width="0.8" stroke-dasharray="1 1"/><path d="M44 7 l3 -3 M47 4 l3 -3" stroke="#909070" stroke-width="0.8" stroke-dasharray="1 1"/><path d="M50 7 l3 -3 M53 4 l3 -3" stroke="#909070" stroke-width="0.8" stroke-dasharray="1 1"/><path d="M56 7 l3 -3 M59 4 l3 -3" stroke="#909070" stroke-width="0.8" stroke-dasharray="1 1"/></svg>
<div style="left:643px;top:673px;width:14px;height:13px;background:#f4f4e8;border-radius:0 6px 6px 0"></div>
<svg style="left:647px;top:676px" width="5" height="8" viewBox="0 0 5 8"><path d="M0 0 L5 4 L0 8Z" fill="#555"/></svg>
<div style="left:686px;top:113px;width:7px;height:1px;background:#e4e4c0"></div>
<div style="left:892px;top:113px;width:500px;height:1px;background:#e4e4c0"></div>
<div style="left:686px;top:113px;width:1px;height:573px;background:#e4e4c0"></div>
<div style="left:687px;top:114px;width:1px;height:572px;background:#f4f4e8"></div>
<div style="left:1391px;top:113px;width:1px;height:573px;background:#e4e4c0"></div>
<div class="t" style="left:700px;top:109px;font-size:11px;color:#000;font-weight:bold;letter-spacing:0.55px">Zeitreihengruppe</div>
<div class="t" style="left:702px;top:127px;font-size:13px;color:#000;letter-spacing:-0.08px">Zeitreihengruppenkategorie</div>
<div class="t" style="left:702px;top:150px;font-size:13px;color:#000;letter-spacing:-0.08px">Bezeichnung</div>
<div class="t" style="left:702px;top:173px;font-size:13px;color:#000;letter-spacing:-0.08px">Kurzbezeichnung</div>
<div class="t" style="left:702px;top:196px;font-size:13px;color:#000;letter-spacing:-0.08px">Verwendungsart</div>
<div class="t" style="left:702px;top:219px;font-size:13px;color:#000;letter-spacing:-0.08px">Struktur für Aggregation</div>
<div style="left:899px;top:123px;width:478px;height:19px;background:#fff;border-top:1px solid #858570;border-left:1px solid #858570;border-bottom:1px solid #e4e4c4;border-right:1px solid #e4e4c4;border-radius:2px;"></div>
<div class="t" style="left:902px;top:127px;font-size:13px;color:#000;letter-spacing:-0.191px;color:#a49c78">01.01.00 Übergabe TEN</div>
<div style="left:899px;top:146px;width:478px;height:19px;background:#fff;border-top:1px solid #858570;border-left:1px solid #858570;border-bottom:1px solid #e4e4c4;border-right:1px solid #e4e4c4;border-radius:2px;"></div>
<div class="t" style="left:902px;top:150px;font-size:13px;color:#000;letter-spacing:-0.226px">01.01.01 Übergabe TEN NZI</div>
<div style="left:899px;top:169px;width:174px;height:19px;background:#fff;border-top:1px solid #858570;border-left:1px solid #858570;border-bottom:1px solid #e4e4c4;border-right:1px solid #e4e4c4;border-radius:2px;"></div>
<div class="t" style="left:902px;top:173px;font-size:13px;color:#000;letter-spacing:-0.305px">01.01.01</div>
<div style="left:899px;top:192px;width:478px;height:19px;background:#fff;border-top:1px solid #858570;border-left:1px solid #858570;border-bottom:1px solid #e4e4c4;border-right:1px solid #e4e4c4;border-radius:2px;"></div>
<div class="t" style="left:901px;top:196px;font-size:13px;color:#000;letter-spacing:-0.08px">Aggregierte Gruppe</div>
<div style="left:899px;top:215px;width:478px;height:19px;background:#fff;border-top:1px solid #858570;border-left:1px solid #858570;border-bottom:1px solid #e4e4c4;border-right:1px solid #e4e4c4;border-radius:2px;"></div>
<div class="t" style="left:901px;top:219px;font-size:13px;color:#000;letter-spacing:-0.08px">Aggregierte Gruppe</div>
<div style="left:899px;top:243px;width:11px;height:11px;background:#fff;border-top:1px solid #c4c49c;border-left:1px solid #c4c49c;border-right:1px solid #ecece0;border-bottom:1px solid #ecece0"></div>
<div class="t" style="left:912px;top:244px;font-size:11px;color:#000;">Für Fahrplan J/N</div>
<div style="left:1040px;top:243px;width:11px;height:11px;background:#fff;border-top:1px solid #c4c49c;border-left:1px solid #c4c49c;border-right:1px solid #ecece0;border-bottom:1px solid #ecece0"></div>
<div class="t" style="left:1053px;top:244px;font-size:11px;color:#000;">Versenden</div>
<div style="left:1128px;top:243px;width:11px;height:11px;background:#fff;border-top:1px solid #c4c49c;border-left:1px solid #c4c49c;border-right:1px solid #ecece0;border-bottom:1px solid #ecece0"></div>
<div class="t" style="left:1141px;top:244px;font-size:11px;color:#000;">Vollständigkeitsprüfung</div>
<div style="left:1272px;top:243px;width:11px;height:11px;background:#fff;border-top:1px solid #c4c49c;border-left:1px solid #c4c49c;border-right:1px solid #ecece0;border-bottom:1px solid #ecece0"></div>
<svg style="left:1273px;top:244px" width="10" height="10" viewBox="0 0 10 10"><path d="M1.5 5 L4 8 L9 1.5" fill="none" stroke="#202020" stroke-width="2"/></svg>
<div class="t" style="left:1285px;top:244px;font-size:11px;color:#000;">Ergebnis kopieren</div>
<div style="left:899px;top:265px;width:11px;height:11px;background:#fff;border-top:1px solid #c4c49c;border-left:1px solid #c4c49c;border-right:1px solid #ecece0;border-bottom:1px solid #ecece0"></div>
<div class="t" style="left:912px;top:266px;font-size:11px;color:#000;">Fortschreiben J/N</div>
<div style="left:899px;top:288px;width:11px;height:11px;background:#fff;border-top:1px solid #c4c49c;border-left:1px solid #c4c49c;border-right:1px solid #ecece0;border-bottom:1px solid #ecece0"></div>
<div class="t" style="left:912px;top:289px;font-size:11px;color:#000;">Formeleditor nutzen J/N</div>
<div style="left:686px;top:337px;width:7px;height:1px;background:#8a8a8a"></div>
<div style="left:686px;top:338px;width:7px;height:1px;background:#f8f8f0"></div>
<div style="left:892px;top:337px;width:497px;height:1px;background:#8a8a8a"></div>
<div style="left:892px;top:338px;width:497px;height:1px;background:#f8f8f0"></div>
<div class="t" style="left:700px;top:337px;font-size:11px;color:#000;">Eingangszeitreihen</div>
<div class="t" style="left:704px;top:354px;font-size:13px;color:#000;letter-spacing:-0.08px">Mengenkategorie</div>
<div style="left:899px;top:349px;width:190px;height:20px;background:#fff;border-top:1px solid #858570;border-left:1px solid #858570;border-bottom:1px solid #e4e4c4;border-right:1px solid #e4e4c4;border-radius:2px;"></div>
<div class="t" style="left:903px;top:354px;font-size:11px;color:#000;">Leistung</div>
<div style="left:1074px;top:350px;width:14px;height:17px;background:#f0f0e0"></div>
<svg style="left:1077px;top:356px" width="9" height="5" viewBox="0 0 9 5"><path d="M0 0 H9 L4.5 5Z" fill="#555"/></svg>
<div class="t" style="left:704px;top:379px;font-size:13px;color:#000;letter-spacing:-0.08px">Zeitintervall</div>
<div style="left:899px;top:374px;width:190px;height:20px;background:#fff;border-top:1px solid #858570;border-left:1px solid #858570;border-bottom:1px solid #e4e4c4;border-right:1px solid #e4e4c4;border-radius:2px;"></div>
<div class="t" style="left:1071px;top:378px;font-size:13px;color:#000;">15</div>
<div class="t" style="left:1131px;top:354px;font-size:13px;color:#000;letter-spacing:-0.08px">Abschnittsintervall</div>
<div style="left:1254px;top:349px;width:123px;height:20px;background:#fff;border-top:1px solid #858570;border-left:1px solid #858570;border-bottom:1px solid #e4e4c4;border-right:1px solid #e4e4c4;border-radius:2px;"></div>
<div class="t" style="left:1258px;top:354px;font-size:11px;color:#000;">tageweise</div>
<div style="left:1362px;top:350px;width:14px;height:17px;background:#f0f0e0"></div>
<svg style="left:1365px;top:356px" width="9" height="5" viewBox="0 0 9 5"><path d="M0 0 H9 L4.5 5Z" fill="#555"/></svg>
<div class="t" style="left:1131px;top:379px;font-size:13px;color:#000;letter-spacing:-0.08px">Zeiteinheit</div>
<div style="left:1254px;top:374px;width:123px;height:20px;background:#fff;border-top:1px solid #858570;border-left:1px solid #858570;border-bottom:1px solid #e4e4c4;border-right:1px solid #e4e4c4;border-radius:2px;"></div>
<div class="t" style="left:1256px;top:378px;font-size:13px;color:#000;">Min</div>
<div style="left:686px;top:407px;width:7px;height:1px;background:#8a8a8a"></div>
<div style="left:686px;top:408px;width:7px;height:1px;background:#f8f8f0"></div>
<div style="left:892px;top:407px;width:497px;height:1px;background:#8a8a8a"></div>
<div style="left:892px;top:408px;width:497px;height:1px;background:#f8f8f0"></div>
<div class="t" style="left:699px;top:405px;font-size:11px;color:#000;">Gruppenberechnung</div>
<div style="left:899px;top:428px;width:11px;height:11px;background:#fff;border-top:1px solid #c4c49c;border-left:1px solid #c4c49c;border-right:1px solid #ecece0;border-bottom:1px solid #ecece0"></div>
<svg style="left:900px;top:429px" width="10" height="10" viewBox="0 0 10 10"><path d="M1.5 5 L4 8 L9 1.5" fill="none" stroke="#202020" stroke-width="2"/></svg>
<div class="t" style="left:913px;top:429px;font-size:11px;color:#000;">nachgelagerte Operationen auf Aggregationsergebnis</div>
<div class="t" style="left:704px;top:452px;font-size:13px;color:#000;letter-spacing:-0.08px">Faktor</div>
<div style="left:900px;top:448px;width:59px;height:20px;background:#fff;border-top:1px solid #858570;border-left:1px solid #858570;border-bottom:1px solid #e4e4c4;border-right:1px solid #e4e4c4;border-radius:2px;"></div>
<div class="t" style="left:704px;top:477px;font-size:13px;color:#000;letter-spacing:-0.08px">Operation</div>
<div style="left:900px;top:472px;width:261px;height:20px;background:#fff;border-top:1px solid #858570;border-left:1px solid #858570;border-bottom:1px solid #e4e4c4;border-right:1px solid #e4e4c4;border-radius:2px;"></div>
<div class="t" style="left:904px;top:477px;font-size:11px;color:#000;">Schwellwertfilter</div>
<div style="left:1146px;top:473px;width:14px;height:17px;background:#f0f0e0"></div>
<svg style="left:1149px;top:479px" width="9" height="5" viewBox="0 0 9 5"><path d="M0 0 H9 L4.5 5Z" fill="#555"/></svg>
<div class="t" style="left:704px;top:502px;font-size:13px;color:#000;letter-spacing:-0.08px">obere Schwelle</div>
<div style="left:900px;top:498px;width:161px;height:20px;background:#fff;border-top:1px solid #858570;border-left:1px solid #858570;border-bottom:1px solid #e4e4c4;border-right:1px solid #e4e4c4;border-radius:2px;"></div>
<div class="t" style="left:1067px;top:499px;font-size:13px;color:#000;letter-spacing:-0.08px">untere Schwelle</div>
<div style="left:1168px;top:497px;width:162px;height:20px;background:#fff;border-top:1px solid #858570;border-left:1px solid #858570;border-bottom:1px solid #e4e4c4;border-right:1px solid #e4e4c4;border-radius:2px;"></div>
<div class="t" style="left:1171px;top:501px;font-size:13px;color:#000;">0</div>
<div style="left:1334px;top:497px;width:43px;height:20px;background:#fff;border-top:1px solid #858570;border-left:1px solid #858570;border-bottom:1px solid #e4e4c4;border-right:1px solid #e4e4c4;border-radius:2px;"></div>
<div class="t" style="left:1346px;top:501px;font-size:13px;color:#000;">kW</div>
<div style="left:686px;top:526px;width:703px;height:1px;background:#8a8a8a"></div>
<div style="left:686px;top:527px;width:703px;height:1px;background:#f8f8f0"></div>
<div class="t" style="left:703px;top:538px;font-size:12.5px;color:#000;letter-spacing:-0.08px">Beschreibung</div>
<div style="left:899px;top:534px;width:478px;height:75px;background:#fff;border-top:1px solid #858570;border-left:1px solid #858570;border-bottom:1px solid #e4e4c4;border-right:1px solid #e4e4c4;border-radius:2px;"></div>
<div style="left:1361px;top:535px;width:15px;height:73px;background:#d8dcb8;border-radius:7px"></div>
<div style="left:1362px;top:536px;width:13px;height:71px;background:#f4f4e8;border-radius:6px"></div>
<svg style="left:1364px;top:540px" width="9" height="5" viewBox="0 0 9 5"><path d="M0 5 H9 L4.5 0Z" fill="#555"/></svg>
<div style="left:1362px;top:548px;width:13px;height:1px;background:#777"></div>
<div style="left:1362px;top:593px;width:13px;height:1px;background:#777"></div>
<svg style="left:1364px;top:597px" width="9" height="5" viewBox="0 0 9 5"><path d="M0 0 H9 L4.5 5Z" fill="#555"/></svg>
<svg style="left:1364px;top:565px" width="8" height="10" viewBox="0 0 8 10"><path d="M1 5 l3 -3 M4 9 l3 -3" stroke="#909070" stroke-dasharray="1 1"/></svg>
<div style="left:686px;top:614px;width:703px;height:1px;background:#8a8a8a"></div>
<div style="left:686px;top:615px;width:703px;height:1px;background:#f8f8f0"></div>
<div class="t" style="left:867px;top:628px;font-size:13px;color:#000;letter-spacing:-0.08px">Von</div>
<div style="left:898px;top:624px;width:112px;height:19px;background:#fff;border-top:1px solid #858570;border-left:1px solid #858570;border-bottom:1px solid #e4e4c4;border-right:1px solid #e4e4c4;border-radius:2px;"></div>
<div style="left:897px;top:623px;width:76px;height:19px;background:#fff000;mix-blend-mode:multiply"></div>
<div class="t" style="left:901px;top:628px;font-size:13px;color:#000;letter-spacing:-0.08px">01.06.2025</div>
<div class="t" style="left:1034px;top:628px;font-size:13px;color:#000;letter-spacing:-0.08px">Bis</div>
<div style="left:1069px;top:624px;width:111px;height:19px;background:#fff;border-top:1px solid #858570;border-left:1px solid #858570;border-bottom:1px solid #e4e4c4;border-right:1px solid #e4e4c4;border-radius:2px;"></div>
<div style="left:1062px;top:624px;width:90px;height:18px;background:#fff000;mix-blend-mode:multiply"></div>
<div class="t" style="left:1071px;top:628px;font-size:13px;color:#000;letter-spacing:-0.08px">30.06.2025</div>
<div style="left:899px;top:656px;width:147px;height:20px;background:#d9d9d9;border-top:1px solid #808080;border-left:1px solid #808080;border-right:1px solid #000;border-bottom:1px solid #000;border-radius:2px;box-shadow:1px 1px 0 rgba(0,0,0,0.35)"></div>
<div class="t" style="left:899px;top:660px;width:147px;text-align:center;font-size:13px;color:#000;letter-spacing:-0.2px">Gruppe neu berechnen</div>
<svg style="left:886px;top:652px" width="172" height="26" viewBox="0 0 172 26"><path d="M2 2 C60 3 130 5 169 7 L169 24 C120 23 60 20 2 19Z" fill="#ffff00" style="mix-blend-mode:multiply"/></svg>
<div style="left:1159px;top:656px;width:105px;height:20px;background:#d9d9d9;border-top:1px solid #808080;border-left:1px solid #808080;border-right:1px solid #000;border-bottom:1px solid #000;border-radius:2px;box-shadow:1px 1px 0 rgba(0,0,0,0.35)"></div>
<div class="t" style="left:1157px;top:660px;width:105px;text-align:center;font-size:13px;color:#000;letter-spacing:-0.2px">Dateiausgabe...</div>
<div style="left:1273px;top:656px;width:104px;height:20px;background:#d9d9d9;border-top:1px solid #808080;border-left:1px solid #808080;border-right:1px solid #000;border-bottom:1px solid #000;border-radius:2px;box-shadow:1px 1px 0 rgba(0,0,0,0.35)"></div>
<div class="t" style="left:1271px;top:660px;width:104px;text-align:center;font-size:13px;color:#000;letter-spacing:-0.2px">Protokoll...</div>
<div style="left:385px;top:904px;width:1114px;height:14px;background:#f4f4e8;border:1px solid #d4d4b0;border-radius:9px 0 0 0"></div>
<div class="t" style="left:392px;top:908px;font-size:12px;color:#000">Zeitreihenkategorien</div>
</body></html>
